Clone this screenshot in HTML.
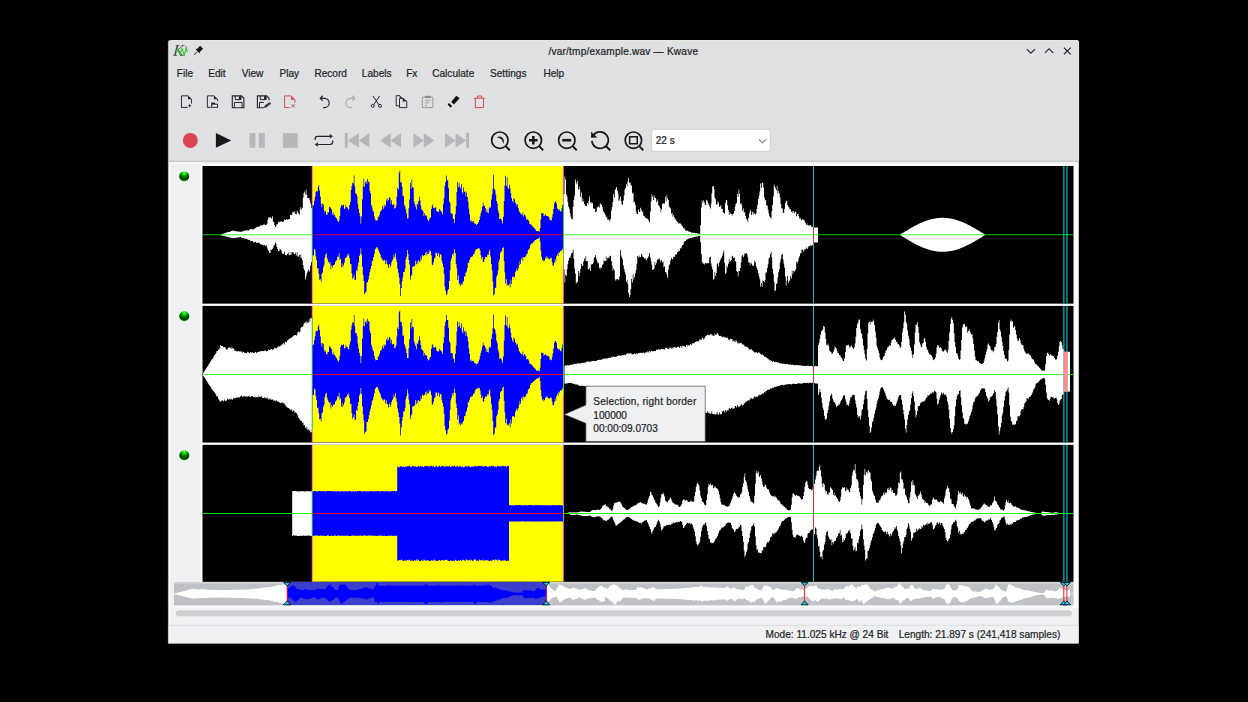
<!DOCTYPE html>
<html><head><meta charset="utf-8"><title>Kwave</title>
<style>html,body{margin:0;padding:0;background:#000;width:1248px;height:702px;overflow:hidden;font-family:"Liberation Sans",sans-serif}</style>
</head><body>
<svg width="1248" height="702" viewBox="0 0 1248 702" style="position:absolute;left:0;top:0">
<defs>
<radialGradient id="ledg" cx="0.5" cy="0.16" r="0.86"><stop offset="0" stop-color="#6aff6a"/><stop offset="0.22" stop-color="#08d808"/><stop offset="0.5" stop-color="#006c00"/><stop offset="0.78" stop-color="#003e00"/><stop offset="0.9" stop-color="#009a00"/><stop offset="1" stop-color="#34f034"/></radialGradient>
<path id="p1" d="M203 234.8V234.8H203.8V234.8H204.5V234.8H205.2V234.8H206V234.8H206.8V234.8H207.5V234.8H208.2V234.8H209V234.8H209.8V234.8H210.5V234.8H211.2V234.8H212V234.8H212.8V234.8H213.5V234.8H214.2V234.8H215V234.8H215.8V234.8H216.5V234.8H217.2V234.8H218V234.8H218.8V234.8H219.5V234.8H220.2V234.4H221V234.2H221.8V233.9H222.5V233.7H223.2V233.6H224V233.3H224.8V233H225.5V232.7H226.2V232.6H227V232.3H227.8V232.1H228.5V231.8H229.2V232H230V231.7H230.8V231.1H231.5V231.1H232.2V230.6H233V230.8H233.8V230.8H234.5V231.2H235.2V231H236V231.2H236.8V231.5H237.5V231.3H238.2V231.8H239V231.4H239.8V231.9H240.5V231.7H241.2V231.5H242V231.5H242.8V231.2H243.5V230.9H244.2V230.5H245V230.4H245.8V230.7H246.5V230.3H247.2V230.3H248V230.5H248.8V229.9H249.5V229.2H250.2V229.1H251V229.3H251.8V228.7H252.5V229.5H253.2V229.2H254V228.8H254.8V227.9H255.5V228.3H256.2V226.9H257V226.8H257.8V226.8H258.5V227H259.2V226.3H260V225.5H260.8V225.5H261.5V225.2H262.2V224.9H263V224.4H263.8V224.6H264.5V224.4H265.2V225H266V224.8H266.8V223.7H267.5V219.8H268.2V217.5H269V217.8H269.8V216.9H270.5V217.7H271.2V218.7H272V216.3H272.8V221.4H273.5V221.9H274.2V224.9H275V227.1H275.8V226.1H276.5V224.1H277.2V224.2H278V222H278.8V221.5H279.5V222.6H280.2V221.2H281V221.5H281.8V221.8H282.5V222H283.2V221.6H284V219.5H284.8V220.1H285.5V220H286.2V218.9H287V219.8H287.8V219.2H288.5V219.3H289.2V219.1H290V215.1H290.8V214.4H291.5V215.3H292.2V212.3H293V211.7H293.8V213H294.5V211.2H295.2V213.9H296V214.3H296.8V210.6H297.5V212.2H298.2V213.6H299V214.6H299.8V209.2H300.5V207H301.2V209.4H302V208.1H302.8V197.8H303.5V193.3H304.2V191.4H305V194.3H305.8V189.5H306.5V195H307.2V198H308V197.9H308.8V198H309.5V200.2H310.2V203.6H311V208H311.8V204.9H312.5V205.6H313.2V204.9H314V200.7H314.8V196.7H315.5V192H316.2V191.1H317V191.4H317.8V187.1H318.5V185H319.2V190.4H320V196.6H320.8V203.7H321.5V207.2H322.2V203.4H323V204.4H323.8V210.2H324.5V212.4H325.2V211.1H326V214.4H326.8V215H327.5V212.1H328.2V212.4H329V206.7H329.8V207.2H330.5V208.6H331.2V209.4H332V214.6H332.8V212H333.5V215.6H334.2V214.8H335V216.7H335.8V218.1H336.5V218.7H337.2V220.8H338V222.1H338.8V220.4H339.5V216.1H340.2V207.5H341V205.1H341.8V205.6H342.5V205.6H343.2V204.6H344V209H344.8V208.3H345.5V205.1H346.2V207.1H347V207.5H347.8V209.4H348.5V209.6H349.2V205H350V202H350.8V190.1H351.5V185.9H352.2V182.7H353V183.4H353.8V175.4H354.5V186.6H355.2V193.5H356V193.7H356.8V196.1H357.5V203.8H358.2V208.8H359V213.1H359.8V216.2H360.5V223.7H361.2V216.6H362V199.2H362.8V186.3H363.5V178.6H364.2V186.7H365V182.5H365.8V181.1H366.5V184.1H367.2V179.1H368V181.4H368.8V182.3H369.5V190.9H370.2V193.3H371V205.1H371.8V207.6H372.5V210.5H373.2V211.8H374V216.4H374.8V219.3H375.5V220.8H376.2V220.4H377V220.3H377.8V216.5H378.5V217.3H379.2V214.5H380V211.5H380.8V210.7H381.5V209.6H382.2V206.1H383V208.7H383.8V204.5H384.5V206.9H385.2V205.4H386V199.4H386.8V201.5H387.5V197.9H388.2V200.3H389V197.2H389.8V198.3H390.5V204H391.2V200.3H392V204.9H392.8V204.4H393.5V204.1H394.2V208.6H395V208H395.8V205.6H396.5V196.8H397.2V188H398V189.5H398.8V172.7H399.5V170.6H400.2V182.2H401V182.3H401.8V186.8H402.5V196.5H403.2V195.7H404V204.7H404.8V206.8H405.5V209.5H406.2V213.4H407V218.5H407.8V218.3H408.5V208.3H409.2V199.6H410V182.8H410.8V188.8H411.5V179.5H412.2V187.2H413V187.7H413.8V201.6H414.5V204H415.2V206.4H416V209.6H416.8V203.7H417.5V204.5H418.2V201H419V196.7H419.8V200.6H420.5V205.4H421.2V209.5H422V210.3H422.8V211.3H423.5V216.1H424.2V213.3H425V215.6H425.8V215.3H426.5V216.5H427.2V219.4H428V221H428.8V220.1H429.5V218H430.2V217.5H431V209.1H431.8V205.9H432.5V204.3H433.2V208H434V208.2H434.8V207.6H435.5V207.2H436.2V210.9H437V211.6H437.8V212.1H438.5V211.5H439.2V209.1H440V210.3H440.8V211.6H441.5V212.2H442.2V214.5H443V203.7H443.8V197.7H444.5V186.1H445.2V182.1H446V175.5H446.8V180.5H447.5V180.3H448.2V188.2H449V201.6H449.8V203.3H450.5V213.3H451.2V213.3H452V214H452.8V218.8H453.5V218.8H454.2V223.1H455V214.1H455.8V206H456.5V191.9H457.2V182H458V187.2H458.8V182.7H459.5V186.5H460.2V188.6H461V183.9H461.8V192H462.5V194H463.2V187.6H464V191.9H464.8V191.1H465.5V196.4H466.2V192.6H467V196.8H467.8V201.6H468.5V208.8H469.2V214.2H470V221.2H470.8V219.8H471.5V222H472.2V221.4H473V221.1H473.8V223H474.5V223.7H475.2V223.8H476V225H476.8V223.7H477.5V224.1H478.2V222H479V219.9H479.8V216.4H480.5V213.2H481.2V210.7H482V206.8H482.8V202.8H483.5V205.7H484.2V205.9H485V208H485.8V212.2H486.5V209.3H487.2V212.5H488V213H488.8V208.5H489.5V206.6H490.2V207.8H491V199.4H491.8V194.6H492.5V188.7H493.2V174.8H494V188.9H494.8V190.4H495.5V194.5H496.2V201.1H497V203.6H497.8V210.2H498.5V212.9H499.2V219.1H500V218.6H500.8V219H501.5V220.8H502.2V223.4H503V216.8H503.8V201H504.5V185.5H505.2V175.8H506V186H506.8V177.3H507.5V187.6H508.2V188.9H509V184.8H509.8V188.5H510.5V193.2H511.2V198H512V201H512.8V202.7H513.5V198H514.2V199.2H515V202.4H515.8V204.1H516.5V206H517.2V204.2H518V208.2H518.8V211.3H519.5V212.3H520.2V213.6H521V214.2H521.8V215.2H522.5V211.9H523.2V216.5H524V214.3H524.8V215.4H525.5V216.7H526.2V219.7H527V219.3H527.8V219.7H528.5V221H529.2V223.8H530V224.6H530.8V224.3H531.5V225.5H532.2V226.5H533V227.1H533.8V228.3H534.5V228.6H535.2V229.7H536V230.9H536.8V231.2H537.5V230.9H538.2V231.2H539V231.6H539.8V228.2H540.5V219.3H541.2V212.9H542V213.4H542.8V213.1H543.5V216.2H544.2V215.4H545V214.3H545.8V215.9H546.5V215.7H547.2V216.3H548V216.4H548.8V217.4H549.5V220.2H550.2V219.8H551V220.6H551.8V217.5H552.5V214.1H553.2V209H554V203.2H554.8V201.4H555.5V201.5H556.2V203.6H557V208.6H557.8V209.2H558.5V210.7H559.2V209.4H560V211.2H560.8V211.8H561.5V208.3H562.2V204.8H563V204.2H563.8V194.2H564.5V176.4H565.2V179.5H566V194.3H566.8V196.4H567.5V201.9H568.2V206.7H569V208.8H569.8V213.2H570.5V216.8H571.2V218.8H572V219.2H572.8V206.7H573.5V199.9H574.2V195.4H575V179.6H575.8V182.7H576.5V184.3H577.2V181.1H578V189.6H578.8V186.2H579.5V189.2H580.2V196.7H581V192.5H581.8V201.6H582.5V198.2H583.2V201.4H584V203.9H584.8V205.7H585.5V205.8H586.2V206.3H587V202.9H587.8V204.4H588.5V200.9H589.2V196.4H590V202.2H590.8V203.6H591.5V202H592.2V203.3H593V208.2H593.8V209.1H594.5V208.4H595.2V212.3H596V211.4H596.8V207.4H597.5V206.9H598.2V206.3H599V207.5H599.8V203H600.5V204.6H601.2V204.8H602V207.2H602.8V210.8H603.5V211.9H604.2V213.5H605V215.1H605.8V217.5H606.5V216.4H607.2V219.4H608V219.4H608.8V219.9H609.5V221.5H610.2V219.1H611V210.6H611.8V207H612.5V201.9H613.2V193.9H614V197.4H614.8V190.1H615.5V188.8H616.2V186.9H617V190.6H617.8V193.8H618.5V201.1H619.2V199.2H620V196.5H620.8V201.1H621.5V204.1H622.2V205H623V200.5H623.8V195.2H624.5V189.4H625.2V188.1H626V183.9H626.8V186.6H627.5V181.4H628.2V178H629V183H629.8V182.3H630.5V184.8H631.2V185.7H632V193.5H632.8V192.4H633.5V202.5H634.2V201.7H635V204.7H635.8V211.6H636.5V213.7H637.2V213.9H638V209.5H638.8V212H639.5V211.8H640.2V207.8H641V209.8H641.8V211.9H642.5V211.5H643.2V215.7H644V215.9H644.8V217.9H645.5V217.3H646.2V218.8H647V218.4H647.8V219.2H648.5V221H649.2V222.4H650V211.4H650.8V201.6H651.5V194.2H652.2V196.5H653V199.9H653.8V195.5H654.5V197.4H655.2V197.9H656V202.3H656.8V199.3H657.5V201H658.2V205.2H659V206.3H659.8V208H660.5V212.2H661.2V209.2H662V203.7H662.8V203.5H663.5V203.2H664.2V203.6H665V196.7H665.8V201.2H666.5V195.2H667.2V198.6H668V199.9H668.8V206.6H669.5V207.4H670.2V208.6H671V213.4H671.8V212.9H672.5V216.8H673.2V215.1H674V217.2H674.8V219.6H675.5V218.8H676.2V220.9H677V221.8H677.8V222.6H678.5V223.8H679.2V223.2H680V223.5H680.8V224.4H681.5V225.6H682.2V226.2H683V228H683.8V228.2H684.5V229.2H685.2V230.5H686V230.7H686.8V230.5H687.5V230.9H688.2V231.6H689V231.7H689.8V231.8H690.5V232.2H691.2V232.7H692V232.4H692.8V232.9H693.5V232.8H694.2V232.8H695V233.2H695.8V233H696.5V233.2H697.2V233.4H698V233.4H698.8V233.7H699.5V233.8H700.2V224.9H701V207.5H701.8V200.5H702.5V203.1H703.2V200.6H704V202.6H704.8V204.7H705.5V205.1H706.2V199.8H707V200.8H707.8V203.1H708.5V204.7H709.2V206.6H710V208.4H710.8V203.8H711.5V193.4H712.2V186.6H713V186.1H713.8V189.2H714.5V197.6H715.2V199.3H716V204.6H716.8V204.6H717.5V201.5H718.2V202.5H719V207H719.8V206.4H720.5V205H721.2V208.8H722V208.7H722.8V212.2H723.5V213.1H724.2V213.8H725V203.3H725.8V200.2H726.5V199.9H727.2V205.5H728V209.9H728.8V215H729.5V212H730.2V213.8H731V213.9H731.8V215.8H732.5V214H733.2V213.5H734V210.9H734.8V206.4H735.5V203.9H736.2V202.8H737V194.1H737.8V197H738.5V189.8H739.2V193.8H740V204.1H740.8V202.9H741.5V205.4H742.2V211.1H743V208.6H743.8V212.7H744.5V211.8H745.2V215.8H746V218.8H746.8V219.9H747.5V221.7H748.2V217.9H749V213.6H749.8V209.6H750.5V211.1H751.2V215H752V211.7H752.8V214.5H753.5V212.3H754.2V213.8H755V214.5H755.8V213.4H756.5V209.1H757.2V204.8H758V199.1H758.8V195.3H759.5V191.6H760.2V183.6H761V187.8H761.8V182.4H762.5V183.1H763.2V187.6H764V197.6H764.8V200.5H765.5V199.9H766.2V205.4H767V205.7H767.8V209.7H768.5V213.3H769.2V216.4H770V217.5H770.8V218.5H771.5V211.3H772.2V204.8H773V196.5H773.8V184.4H774.5V186.6H775.2V188.3H776V190.3H776.8V185.8H777.5V193.4H778.2V190.9H779V193.6H779.8V197.4H780.5V203.9H781.2V208.2H782V208.5H782.8V213H783.5V212.7H784.2V208.8H785V203.1H785.8V200.9H786.5V201H787.2V204.9H788V206.6H788.8V207.7H789.5V209.7H790.2V208.9H791V211.9H791.8V210.7H792.5V213.2H793.2V211.1H794V213.2H794.8V211.6H795.5V212H796.2V216.3H797V214.1H797.8V213.9H798.5V216.3H799.2V218.4H800V218.2H800.8V219.8H801.5V220.2H802.2V219.1H803V219.5H803.8V220.1H804.5V221.4H805.2V223.2H806V224.9H806.8V223.4H807.5V225.3H808.2V225.5H809V225.6H809.8V225H810.5V225.3H811.2V226.8H812V226.9H812.8V226.8H813.5V227.4H814.2V227.4H815V227.4H815.8V227.4H816.5V227.4H817.2V227.4H818V234.8H818.8V234.8H819.5V234.8H820.2V234.8H821V234.8H821.8V234.8H822.5V234.8H823.2V234.8H824V234.8H824.8V234.8H825.5V234.8H826.2V234.8H827V234.8H827.8V234.8H828.5V234.8H829.2V234.8H830V234.8H830.8V234.8H831.5V234.8H832.2V234.8H833V234.8H833.8V234.8H834.5V234.8H835.2V234.8H836V234.8H836.8V234.8H837.5V234.8H838.2V234.8H839V234.8H839.8V234.8H840.5V234.8H841.2V234.8H842V234.8H842.8V234.8H843.5V234.8H844.2V234.8H845V234.8H845.8V234.8H846.5V234.8H847.2V234.8H848V234.8H848.8V234.8H849.5V234.8H850.2V234.8H851V234.8H851.8V234.8H852.5V234.8H853.2V234.8H854V234.8H854.8V234.8H855.5V234.8H856.2V234.8H857V234.8H857.8V234.8H858.5V234.8H859.2V234.8H860V234.8H860.8V234.8H861.5V234.8H862.2V234.8H863V234.8H863.8V234.8H864.5V234.8H865.2V234.8H866V234.8H866.8V234.8H867.5V234.8H868.2V234.8H869V234.8H869.8V234.8H870.5V234.8H871.2V234.8H872V234.8H872.8V234.8H873.5V234.8H874.2V234.8H875V234.8H875.8V234.8H876.5V234.8H877.2V234.8H878V234.8H878.8V234.8H879.5V234.8H880.2V234.8H881V234.8H881.8V234.8H882.5V234.8H883.2V234.8H884V234.8H884.8V234.8H885.5V234.8H886.2V234.8H887V234.8H887.8V234.8H888.5V234.8H889.2V234.8H890V234.8H890.8V234.8H891.5V234.8H892.2V234.8H893V234.8H893.8V234.8H894.5V234.8H895.2V234.8H896V234.8H896.8V234.8H897.5V234.8H898.2V234.8H899V234.8H899.8V234.6H900.5V234.1H901.2V233.6H902V233.2H902.8V232.7H903.5V232.3H904.2V231.8H905V231.3H905.8V230.9H906.5V230.4H907.2V230H908V229.5H908.8V229.1H909.5V228.6H910.2V228.2H911V227.8H911.8V227.4H912.5V226.9H913.2V226.5H914V226.1H914.8V225.7H915.5V225.3H916.2V224.9H917V224.6H917.8V224.2H918.5V223.8H919.2V223.5H920V223.1H920.8V222.8H921.5V222.5H922.2V222.2H923V221.8H923.8V221.6H924.5V221.3H925.2V221H926V220.7H926.8V220.5H927.5V220.2H928.2V220H929V219.8H929.8V219.5H930.5V219.3H931.2V219.2H932V219H932.8V218.8H933.5V218.7H934.2V218.5H935V218.4H935.8V218.3H936.5V218.2H937.2V218.1H938V218H938.8V217.9H939.5V217.9H940.2V217.8H941V217.8H941.8V217.8H942.5V217.8H943.2V217.8H944V217.8H944.8V217.9H945.5V217.9H946.2V218H947V218.1H947.8V218.2H948.5V218.3H949.2V218.4H950V218.5H950.8V218.6H951.5V218.8H952.2V218.9H953V219.1H953.8V219.3H954.5V219.5H955.2V219.7H956V219.9H956.8V220.2H957.5V220.4H958.2V220.7H959V220.9H959.8V221.2H960.5V221.5H961.2V221.8H962V222.1H962.8V222.4H963.5V222.7H964.2V223.1H965V223.4H965.8V223.8H966.5V224.1H967.2V224.5H968V224.9H968.8V225.3H969.5V225.6H970.2V226H971V226.4H971.8V226.9H972.5V227.3H973.2V227.7H974V228.1H974.8V228.6H975.5V229H976.2V229.4H977V229.9H977.8V230.3H978.5V230.8H979.2V231.2H980V231.7H980.8V232.2H981.5V232.6H982.2V233.1H983V233.6H983.8V234H984.5V234.5H985.2V234.8H986V234.8H986.8V234.8H987.5V234.8H988.2V234.8H989V234.8H989.8V234.8H990.5V234.8H991.2V234.8H992V234.8H992.8V234.8H993.5V234.8H994.2V234.8H995V234.8H995.8V234.8H996.5V234.8H997.2V234.8H998V234.8H998.8V234.8H999.5V234.8H1000.2V234.8H1001V234.8H1001.8V234.8H1002.5V234.8H1003.2V234.8H1004V234.8H1004.8V234.8H1005.5V234.8H1006.2V234.8H1007V234.8H1007.8V234.8H1008.5V234.8H1009.2V234.8H1010V234.8H1010.8V234.8H1011.5V234.8H1012.2V234.8H1013V234.8H1013.8V234.8H1014.5V234.8H1015.2V234.8H1016V234.8H1016.8V234.8H1017.5V234.8H1018.2V234.8H1019V234.8H1019.8V234.8H1020.5V234.8H1021.2V234.8H1022V234.8H1022.8V234.8H1023.5V234.8H1024.2V234.8H1025V234.8H1025.8V234.8H1026.5V234.8H1027.2V234.8H1028V234.8H1028.8V234.8H1029.5V234.8H1030.2V234.8H1031V234.8H1031.8V234.8H1032.5V234.8H1033.2V234.8H1034V234.8H1034.8V234.8H1035.5V234.8H1036.2V234.8H1037V234.8H1037.8V234.8H1038.5V234.8H1039.2V234.8H1040V234.8H1040.8V234.8H1041.5V234.8H1042.2V234.8H1043V234.8H1043.8V234.8H1044.5V234.8H1045.2V234.8H1046V234.8H1046.8V234.8H1047.5V234.8H1048.2V234.8H1049V234.8H1049.8V234.8H1050.5V234.8H1051.2V234.8H1052V234.8H1052.8V234.8H1053.5V234.8H1054.2V234.8H1055V234.8H1055.8V234.8H1056.5V234.8H1057.2V234.8H1058V234.8H1058.8V234.8H1059.5V234.8H1060.2V234.8H1061V234.8H1061.8V234.8H1062.5V234.8H1063.2V234.8H1064V234.8H1064.8V234.8H1065.5V234.8H1066.2V234.8H1067V234.8H1067.8V234.8H1068.5V234.8H1069.2V234.8H1070V234.8H1070.8V234.8H1071.5V234.8H1072.2V234.8H1073V234.8H1073.8V234.8H1073V234.8H1072.2V234.8H1071.5V234.8H1070.8V234.8H1070V234.8H1069.2V234.8H1068.5V234.8H1067.8V234.8H1067V234.8H1066.2V234.8H1065.5V234.8H1064.8V234.8H1064V234.8H1063.2V234.8H1062.5V234.8H1061.8V234.8H1061V234.8H1060.2V234.8H1059.5V234.8H1058.8V234.8H1058V234.8H1057.2V234.8H1056.5V234.8H1055.8V234.8H1055V234.8H1054.2V234.8H1053.5V234.8H1052.8V234.8H1052V234.8H1051.2V234.8H1050.5V234.8H1049.8V234.8H1049V234.8H1048.2V234.8H1047.5V234.8H1046.8V234.8H1046V234.8H1045.2V234.8H1044.5V234.8H1043.8V234.8H1043V234.8H1042.2V234.8H1041.5V234.8H1040.8V234.8H1040V234.8H1039.2V234.8H1038.5V234.8H1037.8V234.8H1037V234.8H1036.2V234.8H1035.5V234.8H1034.8V234.8H1034V234.8H1033.2V234.8H1032.5V234.8H1031.8V234.8H1031V234.8H1030.2V234.8H1029.5V234.8H1028.8V234.8H1028V234.8H1027.2V234.8H1026.5V234.8H1025.8V234.8H1025V234.8H1024.2V234.8H1023.5V234.8H1022.8V234.8H1022V234.8H1021.2V234.8H1020.5V234.8H1019.8V234.8H1019V234.8H1018.2V234.8H1017.5V234.8H1016.8V234.8H1016V234.8H1015.2V234.8H1014.5V234.8H1013.8V234.8H1013V234.8H1012.2V234.8H1011.5V234.8H1010.8V234.8H1010V234.8H1009.2V234.8H1008.5V234.8H1007.8V234.8H1007V234.8H1006.2V234.8H1005.5V234.8H1004.8V234.8H1004V234.8H1003.2V234.8H1002.5V234.8H1001.8V234.8H1001V234.8H1000.2V234.8H999.5V234.8H998.8V234.8H998V234.8H997.2V234.8H996.5V234.8H995.8V234.8H995V234.8H994.2V234.8H993.5V234.8H992.8V234.8H992V234.8H991.2V234.8H990.5V234.8H989.8V234.8H989V234.8H988.2V234.8H987.5V234.8H986.8V234.8H986V234.8H985.2V235.1H984.5V235.6H983.8V236H983V236.5H982.2V237H981.5V237.4H980.8V237.9H980V238.4H979.2V238.8H978.5V239.3H977.8V239.7H977V240.2H976.2V240.6H975.5V241H974.8V241.5H974V241.9H973.2V242.3H972.5V242.7H971.8V243.2H971V243.6H970.2V244H969.5V244.3H968.8V244.7H968V245.1H967.2V245.5H966.5V245.8H965.8V246.2H965V246.5H964.2V246.9H963.5V247.2H962.8V247.5H962V247.8H961.2V248.1H960.5V248.4H959.8V248.7H959V248.9H958.2V249.2H957.5V249.4H956.8V249.7H956V249.9H955.2V250.1H954.5V250.3H953.8V250.5H953V250.7H952.2V250.8H951.5V251H950.8V251.1H950V251.2H949.2V251.3H948.5V251.4H947.8V251.5H947V251.6H946.2V251.7H945.5V251.7H944.8V251.8H944V251.8H943.2V251.8H942.5V251.8H941.8V251.8H941V251.8H940.2V251.7H939.5V251.7H938.8V251.6H938V251.5H937.2V251.4H936.5V251.3H935.8V251.2H935V251.1H934.2V250.9H933.5V250.8H932.8V250.6H932V250.4H931.2V250.3H930.5V250.1H929.8V249.8H929V249.6H928.2V249.4H927.5V249.1H926.8V248.9H926V248.6H925.2V248.3H924.5V248H923.8V247.8H923V247.4H922.2V247.1H921.5V246.8H920.8V246.5H920V246.1H919.2V245.8H918.5V245.4H917.8V245H917V244.7H916.2V244.3H915.5V243.9H914.8V243.5H914V243.1H913.2V242.7H912.5V242.2H911.8V241.8H911V241.4H910.2V241H909.5V240.5H908.8V240.1H908V239.6H907.2V239.2H906.5V238.7H905.8V238.3H905V237.8H904.2V237.3H903.5V236.9H902.8V236.4H902V236H901.2V235.5H900.5V235H899.8V234.8H899V234.8H898.2V234.8H897.5V234.8H896.8V234.8H896V234.8H895.2V234.8H894.5V234.8H893.8V234.8H893V234.8H892.2V234.8H891.5V234.8H890.8V234.8H890V234.8H889.2V234.8H888.5V234.8H887.8V234.8H887V234.8H886.2V234.8H885.5V234.8H884.8V234.8H884V234.8H883.2V234.8H882.5V234.8H881.8V234.8H881V234.8H880.2V234.8H879.5V234.8H878.8V234.8H878V234.8H877.2V234.8H876.5V234.8H875.8V234.8H875V234.8H874.2V234.8H873.5V234.8H872.8V234.8H872V234.8H871.2V234.8H870.5V234.8H869.8V234.8H869V234.8H868.2V234.8H867.5V234.8H866.8V234.8H866V234.8H865.2V234.8H864.5V234.8H863.8V234.8H863V234.8H862.2V234.8H861.5V234.8H860.8V234.8H860V234.8H859.2V234.8H858.5V234.8H857.8V234.8H857V234.8H856.2V234.8H855.5V234.8H854.8V234.8H854V234.8H853.2V234.8H852.5V234.8H851.8V234.8H851V234.8H850.2V234.8H849.5V234.8H848.8V234.8H848V234.8H847.2V234.8H846.5V234.8H845.8V234.8H845V234.8H844.2V234.8H843.5V234.8H842.8V234.8H842V234.8H841.2V234.8H840.5V234.8H839.8V234.8H839V234.8H838.2V234.8H837.5V234.8H836.8V234.8H836V234.8H835.2V234.8H834.5V234.8H833.8V234.8H833V234.8H832.2V234.8H831.5V234.8H830.8V234.8H830V234.8H829.2V234.8H828.5V234.8H827.8V234.8H827V234.8H826.2V234.8H825.5V234.8H824.8V234.8H824V234.8H823.2V234.8H822.5V234.8H821.8V234.8H821V234.8H820.2V234.8H819.5V234.8H818.8V234.8H818V242.6H817.2V242.6H816.5V242.6H815.8V242.6H815V242.6H814.2V242.6H813.5V244.3H812.8V245.2H812V245.7H811.2V246.3H810.5V244.8H809.8V246.3H809V246.3H808.2V248.5H807.5V249H806.8V247.5H806V249.1H805.2V250.8H804.5V249H803.8V251.4H803V249.7H802.2V249.7H801.5V253H800.8V253.4H800V256.2H799.2V258H798.5V260.9H797.8V263.3H797V261.8H796.2V269.2H795.5V270.2H794.8V271.8H794V271H793.2V274.3H792.5V270.4H791.8V278.6H791V276.2H790.2V281H789.5V280.2H788.8V283H788V276.1H787.2V280.7H786.5V285.6H785.8V276.5H785V267.8H784.2V263.4H783.5V259.4H782.8V253.7H782V255.1H781.2V259.1H780.5V262.6H779.8V269.2H779V272.3H778.2V277.4H777.5V283.3H776.8V284H776V290.3H775.2V291.2H774.5V282H773.8V273.8H773V268.7H772.2V257.5H771.5V251.8H770.8V254.1H770V257.6H769.2V258.4H768.5V264.3H767.8V268.2H767V272.6H766.2V272.4H765.5V279.9H764.8V282.1H764V280.9H763.2V280.6H762.5V286.9H761.8V283H761V286.4H760.2V279.3H759.5V276.6H758.8V273.3H758V269.9H757.2V268.3H756.5V266.1H755.8V262.2H755V260.8H754.2V265.5H753.5V266.2H752.8V265.4H752V263.8H751.2V262.6H750.5V265.3H749.8V262.8H749V262.3H748.2V257.4H747.5V254.4H746.8V253.1H746V253.7H745.2V253H744.5V255.5H743.8V256.9H743V254.9H742.2V256.2H741.5V262.2H740.8V268.1H740V271H739.2V270.9H738.5V276.5H737.8V272H737V270.9H736.2V261.7H735.5V260.9H734.8V257.5H734V258.1H733.2V256.3H732.5V255.7H731.8V260H731V261.1H730.2V262.1H729.5V258.9H728.8V263.8H728V267.2H727.2V265.6H726.5V273.3H725.8V273.8H725V262.7H724.2V250.4H723.5V252.9H722.8V255.5H722V257.7H721.2V258.7H720.5V260.6H719.8V262.4H719V266.5H718.2V263H717.5V264.1H716.8V273H716V275.7H715.2V271.7H714.5V278.8H713.8V279.7H713V269.4H712.2V266.4H711.5V263.5H710.8V256.8H710V257.4H709.2V263.2H708.5V263H707.8V263.3H707V263.4H706.2V263.1H705.5V262.8H704.8V264.5H704V263.4H703.2V263.5H702.5V262.1H701.8V254H701V242.3H700.2V235.9H699.5V236H698.8V236H698V236.4H697.2V236.6H696.5V236.7H695.8V236.8H695V237H694.2V236.9H693.5V237.4H692.8V237.6H692V237.7H691.2V238H690.5V238H689.8V238.6H689V238.8H688.2V238.9H687.5V239.5H686.8V239.7H686V240.9H685.2V241.1H684.5V241.9H683.8V244.5H683V245.1H682.2V246.5H681.5V248.6H680.8V248.3H680V250.9H679.2V250.8H678.5V252H677.8V252.2H677V254.6H676.2V254H675.5V255.3H674.8V257.1H674V256.7H673.2V259.3H672.5V259.3H671.8V258.1H671V260.4H670.2V264.3H669.5V265.2H668.8V269.7H668V277.8H667.2V274.4H666.5V272.3H665.8V272H665V266.3H664.2V267.3H663.5V261.6H662.8V262.4H662V260.1H661.2V262.3H660.5V260.6H659.8V258.2H659V259.6H658.2V259H657.5V260.2H656.8V263.3H656V265.1H655.2V261.9H654.5V268.5H653.8V269.8H653V270H652.2V264.7H651.5V261.2H650.8V257.6H650V253.1H649.2V255.7H648.5V257.3H647.8V258.5H647V260.3H646.2V257.9H645.5V259.2H644.8V258.5H644V256.9H643.2V257.3H642.5V255.5H641.8V253.9H641V257H640.2V257.4H639.5V255.5H638.8V257.3H638V255.9H637.2V264H636.5V270.1H635.8V273.2H635V277.1H634.2V279.5H633.5V274.3H632.8V282.4H632V278.9H631.2V289.3H630.5V295H629.8V297H629V293.2H628.2V284H627.5V279.8H626.8V282H626V274.6H625.2V271.8H624.5V269H623.8V265.2H623V259.5H622.2V257.5H621.5V255.5H620.8V250.3H620V276.6H619.2V280.2H618.5V279.6H617.8V279.1H617V279.2H616.2V280.8H615.5V279.6H614.8V270.5H614V268.5H613.2V270.4H612.5V265.5H611.8V260.9H611V255.7H610.2V255.9H609.5V258.4H608.8V257.6H608V257.9H607.2V260.6H606.5V256.6H605.8V261.2H605V261.2H604.2V260.2H603.5V264H602.8V265.1H602V267.8H601.2V267.3H600.5V269.2H599.8V267.7H599V262.8H598.2V263.4H597.5V261.3H596.8V258.7H596V255.2H595.2V256.9H594.5V257.7H593.8V262.6H593V264H592.2V264.5H591.5V264.6H590.8V271.1H590V268.3H589.2V269.2H588.5V269.5H587.8V261H587V261.2H586.2V256.2H585.5V260.8H584.8V258.5H584V261.4H583.2V265.7H582.5V266.3H581.8V263.8H581V268.9H580.2V272.7H579.5V276.3H578.8V271H578V281.7H577.2V282.5H576.5V283.5H575.8V273.5H575V268.4H574.2V258.8H573.5V249.8H572.8V252.7H572V253.3H571.2V255.6H570.5V258H569.8V257.8H569V260.5H568.2V264.2H567.5V269.3H566.8V276.1H566V274.8H565.2V282.6H564.5V269.2H563.8V254.3H563V248.7H562.2V250.3H561.5V251H560.8V250.9H560V252.8H559.2V251.9H558.5V255.9H557.8V254.2H557V256.3H556.2V261.5H555.5V258.9H554.8V262.7H554V265.6H553.2V265.4H552.5V262H551.8V258.1H551V257.7H550.2V259H549.5V259.4H548.8V258.4H548V257.2H547.2V258.5H546.5V256.3H545.8V258.2H545V260.4H544.2V261.6H543.5V259.4H542.8V260.6H542V256.8H541.2V250.4H540.5V241.5H539.8V237.6H539V238.4H538.2V238.6H537.5V238.9H536.8V239.4H536V240.1H535.2V240.1H534.5V241.5H533.8V241.9H533V243.2H532.2V243.7H531.5V243.7H530.8V245.3H530V248.3H529.2V249.5H528.5V250.1H527.8V253.6H527V254.3H526.2V255.9H525.5V257.3H524.8V257.6H524V257H523.2V261H522.5V257.3H521.8V258.9H521V264.1H520.2V261.6H519.5V265.2H518.8V268.6H518V270.9H517.2V268.6H516.5V270.5H515.8V272.3H515V277.3H514.2V276.8H513.5V276.5H512.8V276.9H512V284H511.2V279.8H510.5V287.6H509.8V283.7H509V285.6H508.2V284.3H507.5V285.8H506.8V279.2H506V283.4H505.2V272.6H504.5V261.1H503.8V247.2H503V248H502.2V251.3H501.5V251.5H500.8V252.7H500V259.4H499.2V261.9H498.5V270.6H497.8V274.8H497V276.7H496.2V287.9H495.5V287.8H494.8V293.9H494V295.5H493.2V281.4H492.5V270.6H491.8V264.1H491V256.8H490.2V249.5H489.5V251.5H488.8V254.8H488V254.6H487.2V257H486.5V257H485.8V256.9H485V259H484.2V261.9H483.5V262H482.8V256.9H482V258.5H481.2V255.2H480.5V250.6H479.8V248.5H479V248.3H478.2V249.1H477.5V248.4H476.8V249.3H476V249.8H475.2V251.7H474.5V254.2H473.8V254.2H473V256.3H472.2V256.7H471.5V257.1H470.8V257.7H470V260.1H469.2V263.1H468.5V262.4H467.8V267.9H467V271.5H466.2V272.9H465.5V276.4H464.8V276.6H464V281.3H463.2V282.3H462.5V285H461.8V283.9H461V285.9H460.2V283.1H459.5V284.7H458.8V275.6H458V279.9H457.2V268.3H456.5V264H455.8V253.3H455V249H454.2V253H453.5V255.8H452.8V254H452V258.2H451.2V261H450.5V270.3H449.8V281H449V288.9H448.2V290.2H447.5V293.8H446.8V294.9H446V290.7H445.2V286.6H444.5V274.1H443.8V267H443V263.4H442.2V260.6H441.5V254.8H440.8V254.3H440V257.2H439.2V253.4H438.5V253H437.8V256.1H437V252.8H436.2V253H435.5V257.5H434.8V258.6H434V262.2H433.2V264.9H432.5V264.8H431.8V255.5H431V251.1H430.2V252.5H429.5V250.2H428.8V253.9H428V254H427.2V251.6H426.5V255.6H425.8V252.7H425V255.1H424.2V255.7H423.5V256.3H422.8V254.9H422V259.5H421.2V256.6H420.5V261.5H419.8V261.7H419V260.3H418.2V263.4H417.5V260.9H416.8V264.2H416V260.7H415.2V265.7H414.5V266.3H413.8V266.6H413V266.8H412.2V274.6H411.5V276H410.8V279.4H410V264.6H409.2V259.9H408.5V254.1H407.8V250H407V256.7H406.2V259.6H405.5V268.4H404.8V272H404V272H403.2V277.5H402.5V281.2H401.8V288H401V296H400.2V283.9H399.5V277.5H398.8V272.8H398V268.8H397.2V262.1H396.5V258.9H395.8V253.3H395V257.1H394.2V254.8H393.5V258.7H392.8V260.5H392V262.3H391.2V265.2H390.5V267.3H389.8V263.9H389V267.9H388.2V264.6H387.5V264.3H386.8V260.6H386V264H385.2V260.5H384.5V259.5H383.8V260.9H383V260H382.2V258.8H381.5V257.5H380.8V254.4H380V252.9H379.2V251H378.5V249.2H377.8V247.5H377V247.3H376.2V248.4H375.5V249.3H374.8V253.7H374V257.1H373.2V260.3H372.5V261.6H371.8V265.9H371V269.1H370.2V272H369.5V275.7H368.8V279.5H368V282.3H367.2V282.3H366.5V291.7H365.8V292.5H365V294.1H364.2V280.9H363.5V275H362.8V266.8H362V254.5H361.2V248.3H360.5V253.8H359.8V256H359V262.4H358.2V266.2H357.5V271.3H356.8V270.3H356V279.9H355.2V280.1H354.5V274.8H353.8V277.4H353V278.8H352.2V273.3H351.5V264.1H350.8V264.3H350V258.3H349.2V253.7H348.5V256H347.8V254.6H347V257H346.2V258.1H345.5V257.9H344.8V262.8H344V265.2H343.2V267.3H342.5V263.5H341.8V267.2H341V258.7H340.2V260.1H339.5V253.2H338.8V256.8H338V256.7H337.2V259.8H336.5V261H335.8V261.8H335V264.6H334.2V264.9H333.5V265.2H332.8V267.4H332V265.6H331.2V269H330.5V262.1H329.8V263.4H329V262.1H328.2V260.2H327.5V258.1H326.8V253.3H326V254.4H325.2V257.7H324.5V264.8H323.8V267.2H323V272.6H322.2V274H321.5V282H320.8V279.3H320V279.7H319.2V274H318.5V267.9H317.8V268.4H317V260.3H316.2V256.4H315.5V250.2H314.8V248.9H314V255.4H313.2V255.3H312.5V262.3H311.8V262.1H311V265.4H310.2V270.6H309.5V271.9H308.8V269.7H308V271.4H307.2V273.6H306.5V276.5H305.8V279.2H305V270.6H304.2V268.5H303.5V265H302.8V260.3H302V258.2H301.2V254.3H300.5V257.8H299.8V255.1H299V256.6H298.2V256.4H297.5V252.3H296.8V255.6H296V252.8H295.2V254.3H294.5V254.1H293.8V252.4H293V252.1H292.2V254.5H291.5V251.9H290.8V255.1H290V255.3H289.2V252.5H288.5V254.4H287.8V253.7H287V255.3H286.2V255H285.5V254.7H284.8V251.8H284V253.9H283.2V253.8H282.5V253.4H281.8V250.5H281V249.6H280.2V249H279.5V251.2H278.8V251H278V249.1H277.2V247H276.5V243.8H275.8V242.6H275V244.7H274.2V245.5H273.5V247.8H272.8V248.9H272V249.9H271.2V249.4H270.5V252.9H269.8V252.4H269V250.9H268.2V249.8H267.5V247.6H266.8V245.3H266V246.2H265.2V245.2H264.5V244.8H263.8V245.6H263V245.1H262.2V244.9H261.5V244.3H260.8V244.2H260V243.4H259.2V242.5H258.5V242.4H257.8V242.9H257V243.1H256.2V242H255.5V241.5H254.8V242.4H254V242.4H253.2V241.3H252.5V241H251.8V240.9H251V241.2H250.2V240.1H249.5V240.3H248.8V239.8H248V239.5H247.2V239H246.5V238.9H245.8V238.6H245V238.8H244.2V238.1H243.5V238H242.8V237.7H242V237.7H241.2V237.3H240.5V237.1H239.8V237.3H239V237.5H238.2V237.7H237.5V237.3H236.8V238H236V238H235.2V237.7H234.5V238.2H233.8V238.1H233V238.2H232.2V238H231.5V237.8H230.8V237.6H230V237.5H229.2V237.5H228.5V237.1H227.8V236.8H227V236.9H226.2V236.3H225.5V236.4H224.8V236H224V236.1H223.2V235.8H222.5V235.6H221.8V235.4H221V235.2H220.2V234.8H219.5V234.8H218.8V234.8H218V234.8H217.2V234.8H216.5V234.8H215.8V234.8H215V234.8H214.2V234.8H213.5V234.8H212.8V234.8H212V234.8H211.2V234.8H210.5V234.8H209.8V234.8H209V234.8H208.2V234.8H207.5V234.8H206.8V234.8H206V234.8H205.2V234.8H204.5V234.8H203.8V234.8H203Z"/><path id="p2" d="M203 372.8V372.8H203.8V371.8H204.5V370.5H205.2V369.2H206V368.3H206.8V367H207.5V365.9H208.2V364.4H209V363.4H209.8V362.2H210.5V360.9H211.2V359.6H212V359.3H212.8V358H213.5V356.5H214.2V354.9H215V354.3H215.8V352.8H216.5V351.1H217.2V350.9H218V349.8H218.8V349.5H219.5V348H220.2V345.2H221V345.9H221.8V345.9H222.5V346.2H223.2V347.2H224V347.1H224.8V347.2H225.5V348.6H226.2V349.7H227V349.3H227.8V347.7H228.5V347.8H229.2V347.4H230V347.8H230.8V349H231.5V347.2H232.2V348.2H233V348.4H233.8V349.3H234.5V351H235.2V350.7H236V351H236.8V351.9H237.5V350.9H238.2V351H239V351.5H239.8V351.5H240.5V351.5H241.2V351.5H242V352.8H242.8V351.9H243.5V351.8H244.2V352.8H245V353H245.8V352.7H246.5V353.4H247.2V351.8H248V352.3H248.8V353.1H249.5V353.6H250.2V352.1H251V353.1H251.8V352.1H252.5V352.5H253.2V353.1H254V353H254.8V351.8H255.5V351.9H256.2V353.2H257V352.2H257.8V352.1H258.5V351.5H259.2V351.7H260V351.3H260.8V351.1H261.5V351H262.2V351.3H263V351.1H263.8V350.9H264.5V350.4H265.2V350.4H266V351.2H266.8V351.1H267.5V350.9H268.2V349.3H269V349.9H269.8V350.1H270.5V348.9H271.2V349.1H272V349.9H272.8V349.3H273.5V349.2H274.2V347.8H275V347.7H275.8V348.7H276.5V348.2H277.2V347.1H278V346.5H278.8V346.2H279.5V346.5H280.2V345.4H281V345.6H281.8V344H282.5V344.6H283.2V342.9H284V344.4H284.8V342.1H285.5V341.2H286.2V342.5H287V340.6H287.8V340.2H288.5V339.1H289.2V338.6H290V338.5H290.8V337.6H291.5V337.7H292.2V336.5H293V336.3H293.8V334.8H294.5V335.3H295.2V335H296V335.7H296.8V334.3H297.5V331.7H298.2V331.7H299V332.6H299.8V331.4H300.5V328.1H301.2V327H302V327.1H302.8V325.8H303.5V323.7H304.2V322.9H305V322H305.8V323.5H306.5V320.7H307.2V322.8H308V322.5H308.8V319.3H309.5V321.7H310.2V317.9H311V318.5H311.8V317.3H312.5V345.2H313.2V344.5H314V340.3H314.8V336.3H315.5V331.6H316.2V330.7H317V331H317.8V326.7H318.5V324.6H319.2V330H320V336.2H320.8V343.3H321.5V346.8H322.2V343H323V344H323.8V349.8H324.5V352H325.2V350.7H326V354H326.8V354.6H327.5V351.7H328.2V352H329V346.3H329.8V346.8H330.5V348.2H331.2V349H332V354.2H332.8V351.6H333.5V355.2H334.2V354.4H335V356.3H335.8V357.7H336.5V358.3H337.2V360.4H338V361.7H338.8V360H339.5V355.7H340.2V347.1H341V344.7H341.8V345.2H342.5V345.2H343.2V344.2H344V348.6H344.8V347.9H345.5V344.7H346.2V346.7H347V347.1H347.8V349H348.5V349.2H349.2V344.6H350V341.6H350.8V329.7H351.5V325.5H352.2V322.3H353V323H353.8V315H354.5V326.2H355.2V333.1H356V333.3H356.8V335.7H357.5V343.4H358.2V348.4H359V352.7H359.8V355.8H360.5V363.3H361.2V356.2H362V338.8H362.8V325.9H363.5V318.2H364.2V326.3H365V322.1H365.8V320.7H366.5V323.7H367.2V318.7H368V321H368.8V321.9H369.5V330.5H370.2V332.9H371V344.7H371.8V347.2H372.5V350.1H373.2V351.4H374V356H374.8V358.9H375.5V360.4H376.2V360H377V359.9H377.8V356.1H378.5V356.9H379.2V354.1H380V351.1H380.8V350.3H381.5V349.2H382.2V345.7H383V348.3H383.8V344.1H384.5V346.5H385.2V345H386V339H386.8V341.1H387.5V337.5H388.2V339.9H389V336.8H389.8V337.9H390.5V343.6H391.2V339.9H392V344.5H392.8V344H393.5V343.7H394.2V348.2H395V347.6H395.8V345.2H396.5V336.4H397.2V327.6H398V329.1H398.8V312.3H399.5V310.2H400.2V321.8H401V321.9H401.8V326.4H402.5V336.1H403.2V335.3H404V344.3H404.8V346.4H405.5V349.1H406.2V353H407V358.1H407.8V357.9H408.5V347.9H409.2V339.2H410V322.4H410.8V328.4H411.5V319.1H412.2V326.8H413V327.3H413.8V341.2H414.5V343.6H415.2V346H416V349.2H416.8V343.3H417.5V344.1H418.2V340.6H419V336.3H419.8V340.2H420.5V345H421.2V349.1H422V349.9H422.8V350.9H423.5V355.7H424.2V352.9H425V355.2H425.8V354.9H426.5V356.1H427.2V359H428V360.6H428.8V359.7H429.5V357.6H430.2V357.1H431V348.7H431.8V345.5H432.5V343.9H433.2V347.6H434V347.8H434.8V347.2H435.5V346.8H436.2V350.5H437V351.2H437.8V351.7H438.5V351.1H439.2V348.7H440V349.9H440.8V351.2H441.5V351.8H442.2V354.1H443V343.3H443.8V337.3H444.5V325.7H445.2V321.7H446V315.1H446.8V320.1H447.5V319.9H448.2V327.8H449V341.2H449.8V342.9H450.5V352.9H451.2V352.9H452V353.6H452.8V358.4H453.5V358.4H454.2V362.7H455V353.7H455.8V345.6H456.5V331.5H457.2V321.6H458V326.8H458.8V322.3H459.5V326.1H460.2V328.2H461V323.5H461.8V331.6H462.5V333.6H463.2V327.2H464V331.5H464.8V330.7H465.5V336H466.2V332.2H467V336.4H467.8V341.2H468.5V348.4H469.2V353.8H470V360.8H470.8V359.4H471.5V361.6H472.2V361H473V360.7H473.8V362.6H474.5V363.3H475.2V363.4H476V364.6H476.8V363.3H477.5V363.7H478.2V361.6H479V359.5H479.8V356H480.5V352.8H481.2V350.3H482V346.4H482.8V342.4H483.5V345.3H484.2V345.5H485V347.6H485.8V351.8H486.5V348.9H487.2V352.1H488V352.6H488.8V348.1H489.5V346.2H490.2V347.4H491V339H491.8V334.2H492.5V328.3H493.2V314.4H494V328.5H494.8V330H495.5V334.1H496.2V340.7H497V343.2H497.8V349.8H498.5V352.5H499.2V358.7H500V358.2H500.8V358.6H501.5V360.4H502.2V363H503V356.4H503.8V340.6H504.5V325.1H505.2V315.4H506V325.6H506.8V316.9H507.5V327.2H508.2V328.5H509V324.4H509.8V328.1H510.5V332.8H511.2V337.6H512V340.6H512.8V342.3H513.5V337.6H514.2V338.8H515V342H515.8V343.7H516.5V345.6H517.2V343.8H518V347.8H518.8V350.9H519.5V351.9H520.2V353.2H521V353.8H521.8V354.8H522.5V351.5H523.2V356.1H524V353.9H524.8V355H525.5V356.3H526.2V359.3H527V358.9H527.8V359.3H528.5V360.6H529.2V363.4H530V364.2H530.8V363.9H531.5V365.1H532.2V366.1H533V366.7H533.8V367.9H534.5V368.2H535.2V369.3H536V370.5H536.8V370.8H537.5V370.5H538.2V370.8H539V371.2H539.8V367.8H540.5V358.9H541.2V352.5H542V353H542.8V352.7H543.5V355.8H544.2V355H545V353.9H545.8V355.5H546.5V355.3H547.2V355.9H548V356H548.8V357H549.5V359.8H550.2V359.4H551V360.2H551.8V357.1H552.5V353.7H553.2V348.6H554V342.8H554.8V341H555.5V341.1H556.2V343.2H557V348.2H557.8V348.8H558.5V350.3H559.2V349H560V350.8H560.8V351.4H561.5V347.9H562.2V344.4H563V343.8H563.8V374.4H564.5V365.8H565.2V365.3H566V365.7H566.8V365.1H567.5V365.6H568.2V365.5H569V365.2H569.8V364.7H570.5V364.8H571.2V365.1H572V364.6H572.8V364.5H573.5V363.9H574.2V363.8H575V364.1H575.8V363.8H576.5V363.7H577.2V363.3H578V363.3H578.8V363.7H579.5V363.1H580.2V363.6H581V362.7H581.8V362.9H582.5V362.8H583.2V362.8H584V362.8H584.8V362.6H585.5V362.6H586.2V361.7H587V361.6H587.8V361.5H588.5V361.4H589.2V361.8H590V361.5H590.8V361.6H591.5V361.3H592.2V361.1H593V360.7H593.8V361.3H594.5V361.1H595.2V360.9H596V361.1H596.8V360.2H597.5V360.1H598.2V360H599V359.8H599.8V359.8H600.5V359.9H601.2V359.6H602V359H602.8V359.5H603.5V358.6H604.2V358.5H605V358.5H605.8V358.9H606.5V357.9H607.2V358.6H608V358H608.8V358H609.5V357.2H610.2V358.1H611V357.3H611.8V356.5H612.5V357.3H613.2V356.5H614V357H614.8V356.5H615.5V356.9H616.2V356.6H617V355.9H617.8V356H618.5V354.9H619.2V355.8H620V355.6H620.8V355.9H621.5V355.4H622.2V355H623V355.2H623.8V354.7H624.5V354.4H625.2V355.3H626V354.1H626.8V353.5H627.5V353.3H628.2V353.5H629V353.6H629.8V353.7H630.5V353H631.2V353.7H632V354.5H632.8V354H633.5V353.9H634.2V353.5H635V354.2H635.8V352.9H636.5V354H637.2V353.8H638V353.1H638.8V353.3H639.5V352.8H640.2V352.7H641V353H641.8V352.8H642.5V353H643.2V352.5H644V353.5H644.8V351.9H645.5V353H646.2V352.2H647V351.5H647.8V352.7H648.5V351.7H649.2V350.9H650V352.2H650.8V350.8H651.5V351.1H652.2V351.2H653V351.2H653.8V351H654.5V351.2H655.2V350.9H656V349.6H656.8V350.1H657.5V349.8H658.2V349.1H659V349.4H659.8V350.1H660.5V349.1H661.2V348.9H662V348.9H662.8V349H663.5V349.4H664.2V349.5H665V348H665.8V347.8H666.5V347.8H667.2V349H668V348.9H668.8V347.4H669.5V348.5H670.2V347.6H671V348.7H671.8V347.6H672.5V348.4H673.2V347.4H674V346.9H674.8V348.1H675.5V346.7H676.2V347.8H677V347H677.8V346.5H678.5V346.8H679.2V347.9H680V346.3H680.8V345.9H681.5V347.7H682.2V345.7H683V345.7H683.8V346H684.5V346.6H685.2V347.1H686V344.9H686.8V344.7H687.5V346.6H688.2V345.1H689V345.8H689.8V344.2H690.5V343.9H691.2V345.3H692V343.4H692.8V343.3H693.5V343.3H694.2V342.8H695V342H695.8V341.8H696.5V341.1H697.2V341.4H698V341.5H698.8V340.5H699.5V339H700.2V339.8H701V339.7H701.8V337.7H702.5V338.1H703.2V339.6H704V338.6H704.8V336.9H705.5V336H706.2V335.4H707V334.9H707.8V334.8H708.5V335.3H709.2V335.1H710V334H710.8V334.5H711.5V334.3H712.2V335.5H713V335.8H713.8V335.7H714.5V333.6H715.2V335.1H716V334.4H716.8V333.3H717.5V333.5H718.2V335.3H719V335.9H719.8V336.1H720.5V335.8H721.2V336.5H722V337.1H722.8V337.5H723.5V336.2H724.2V337.3H725V337.2H725.8V337.9H726.5V337.9H727.2V337.5H728V339.8H728.8V339.1H729.5V340.6H730.2V338.6H731V339H731.8V339.3H732.5V341.6H733.2V340.6H734V341.7H734.8V340.2H735.5V342.1H736.2V340.7H737V343.2H737.8V342.1H738.5V343.9H739.2V343H740V343.1H740.8V342.4H741.5V343.7H742.2V344.4H743V344.5H743.8V345.2H744.5V346.4H745.2V346.4H746V346.8H746.8V347H747.5V347.4H748.2V348.6H749V349.5H749.8V349.8H750.5V349.1H751.2V349.6H752V350.6H752.8V350.8H753.5V351.9H754.2V352.4H755V352.5H755.8V352.1H756.5V352.6H757.2V353.2H758V352.3H758.8V352.8H759.5V352.8H760.2V354H761V355.1H761.8V354.2H762.5V354.8H763.2V355.4H764V356.8H764.8V356.7H765.5V357H766.2V357.8H767V358.2H767.8V358.7H768.5V359.6H769.2V360.2H770V360.3H770.8V360.9H771.5V360.6H772.2V361.9H773V361.1H773.8V361.7H774.5V362.4H775.2V361.8H776V362H776.8V362.6H777.5V362.5H778.2V362.6H779V363H779.8V363.5H780.5V363.5H781.2V363.2H782V363.7H782.8V364.1H783.5V363.5H784.2V364H785V364H785.8V364.2H786.5V363.9H787.2V364.1H788V364.3H788.8V364.8H789.5V364.5H790.2V364.6H791V365H791.8V364.6H792.5V364.8H793.2V365H794V364.9H794.8V365.2H795.5V365.2H796.2V365H797V365H797.8V365.6H798.5V365.3H799.2V365.2H800V365.3H800.8V365.5H801.5V365.9H802.2V365.5H803V366.2H803.8V365.5H804.5V365.9H805.2V366H806V365.9H806.8V365.7H807.5V365.8H808.2V366H809V366.3H809.8V365.9H810.5V365.9H811.2V366H812V366.5H812.8V366H813.5V365.9H814.2V366.4H815V365.7H815.8V366.2H816.5V365.9H817.2V366.2H818V345H818.8V342.8H819.5V338.7H820.2V334.4H821V331.3H821.8V330.8H822.5V329.3H823.2V325.9H824V326.8H824.8V332.5H825.5V339H826.2V344.7H827V345.3H827.8V343.4H828.5V346.3H829.2V350.7H830V351.5H830.8V352H831.5V354.2H832.2V353.5H833V351.8H833.8V349.7H834.5V346.5H835.2V347.4H836V348.5H836.8V351.1H837.5V353.2H838.2V353.1H839V354.9H839.8V355.1H840.5V356.9H841.2V358H842V359.2H842.8V360.9H843.5V361H844.2V358.3H845V352.2H845.8V346.1H846.5V344.9H847.2V345.2H848V344.8H848.8V345.9H849.5V348.3H850.2V346.6H851V345.5H851.8V346.9H852.5V347.9H853.2V349.1H854V347.3H854.8V343.4H855.5V336.8H856.2V328H857V324.3H857.8V322.6H858.5V319.8H859.2V319.5H860V329H860.8V333.2H861.5V334.3H862.2V338.8H863V345.4H863.8V350.1H864.5V353.9H865.2V358.8H866V360.4H866.8V349.2H867.5V333.6H868.2V322.8H869V321.4H869.8V324.6H870.5V321.6H871.2V321.9H872V321.7H872.8V319.6H873.5V321.3H874.2V325.3H875V331.5H875.8V337.7H876.5V345.7H877.2V348.3H878V350.6H878.8V353.2H879.5V357.2H880.2V359.5H881V360.2H881.8V360H882.5V358.4H883.2V356.4H884V355.8H884.8V352.9H885.5V350.7H886.2V349.9H887V347.8H887.8V346.7H888.5V346.6H889.2V345.1H890V345.9H890.8V342.6H891.5V339.8H892.2V339.7H893V338.4H893.8V338.6H894.5V337.2H895.2V340.1H896V342.1H896.8V341.8H897.5V344.3H898.2V343.9H899V345.5H899.8V348H900.5V346.7H901.2V341.7H902V332.8H902.8V328.2H903.5V322.4H904.2V311.4H905V314.8H905.8V321.9H906.5V323.7H907.2V330.3H908V335.8H908.8V338.9H909.5V345.1H910.2V347.5H911V350.7H911.8V355H912.5V358H913.2V353.9H914V344.4H914.8V332.5H915.5V324.8H916.2V324.7H917V322.2H917.8V327H918.5V332.9H919.2V342.2H920V344.6H920.8V347.3H921.5V346.8H922.2V343.6H923V342.7H923.8V338.9H924.5V337.8H925.2V342.1H926V346.7H926.8V349.4H927.5V350.3H928.2V352.8H929V354.6H929.8V353.8H930.5V355.1H931.2V355.4H932V357.3H932.8V359.6H933.5V360.3H934.2V358.9H935V357.4H935.8V353.7H936.5V347.4H937.2V344.9H938V345.4H938.8V347.7H939.5V347.6H940.2V347H941V348.3H941.8V350.8H942.5V351.4H943.2V351.4H944V350.2H944.8V349.2H945.5V350.4H946.2V351.5H947V352.7H947.8V349.8H948.5V340.9H949.2V332.6H950V324.1H950.8V319.1H951.5V317.1H952.2V320H953V323.1H953.8V333.2H954.5V341.9H955.2V346.9H956V352.9H956.8V353.2H957.5V355.6H958.2V358.4H959V360.1H959.8V359.1H960.5V350.5H961.2V340H962V327.5H962.8V323.7H963.5V325H964.2V323.8H965V326.9H965.8V326.3H966.5V326.7H967.2V332.4H968V331H968.8V329H969.5V331.2H970.2V332.8H971V334.5H971.8V333.9H972.5V338.3H973.2V344.1H974V350.5H974.8V356.6H975.5V360.2H976.2V360.2H977V361.3H977.8V360.9H978.5V361.4H979.2V362.9H980V363.3H980.8V363.9H981.5V364.1H982.2V363.5H983V362.9H983.8V360.8H984.5V358.1H985.2V354.8H986V351.8H986.8V348.7H987.5V344.8H988.2V343.6H989V345.4H989.8V346.3H990.5V349.3H991.2V350.6H992V350.2H992.8V352.3H993.5V350.8H994.2V347.3H995V346.7H995.8V344.1H996.5V337.1H997.2V331.8H998V322.7H998.8V320H999.5V329.1H1000.2V331.6H1001V336.7H1001.8V341.7H1002.5V345.9H1003.2V350.9H1004V355H1004.8V358.5H1005.5V358.4H1006.2V359.3H1007V361.4H1007.8V360.4H1008.5V350.1H1009.2V334.4H1010V321.3H1010.8V319.5H1011.5V322.1H1012.2V321H1013V327.7H1013.8V326.8H1014.5V325.9H1015.2V330H1016V334.7H1016.8V338.8H1017.5V341.3H1018.2V340.5H1019V338.1H1019.8V340H1020.5V342.7H1021.2V344.5H1022V344.9H1022.8V345.4H1023.5V349H1024.2V351.3H1025V352.4H1025.8V353.4H1026.5V354.2H1027.2V353.5H1028V353.3H1028.8V355.2H1029.5V354.3H1030.2V355.5H1031V357.5H1031.8V359.2H1032.5V359.1H1033.2V359.8H1034V361.7H1034.8V363.7H1035.5V364H1036.2V364.4H1037V365.5H1037.8V366.3H1038.5V367.1H1039.2V368H1040V368.7H1040.8V369.8H1041.5V370.6H1042.2V370.7H1043V370.6H1043.8V371H1044.5V369.8H1045.2V364.3H1046V356.3H1046.8V352.7H1047.5V352.8H1048.2V353.9H1049V355.5H1049.8V354.6H1050.5V354.5H1051.2V355.4H1052V355.5H1052.8V356H1053.5V356.4H1054.2V358.1H1055V359.6H1055.8V359.7H1056.5V359H1057.2V355.8H1058V351.7H1058.8V346.3H1059.5V342.1H1060.2V341H1061V341.9H1061.8V345.2H1062.5V348.5H1063.2V349.4H1064V351.8H1064.8V351.8H1065.5V351.8H1066.2V351.8H1067V351.8H1067.8V351.8H1068.5V351.8H1069.2V351.8H1070V374.4H1070.8V374.4H1071.5V374.4H1072.2V374.4H1073V374.4H1073.8V374.4H1073V374.4H1072.2V374.4H1071.5V374.4H1070.8V374.4H1070V391.6H1069.2V391.6H1068.5V391.6H1067.8V391.6H1067V391.6H1066.2V391.6H1065.5V391.6H1064.8V391.6H1064V393.9H1063.2V394.5H1062.5V395H1061.8V399H1061V399.6H1060.2V400.8H1059.5V404H1058.8V405.1H1058V402.9H1057.2V399.3H1056.5V397.4H1055.8V398.1H1055V398.8H1054.2V398.4H1053.5V397.3H1052.8V397.6H1052V396.8H1051.2V397H1050.5V399.1H1049.8V400.7H1049V399.9H1048.2V399.7H1047.5V397.9H1046.8V392.5H1046V384.7H1045.2V378.7H1044.5V377.7H1043.8V378.1H1043V378.4H1042.2V378.8H1041.5V379.4H1040.8V379.7H1040V380.5H1039.2V381.4H1038.5V382.3H1037.8V383.1H1037V383.3H1036.2V384.3H1035.5V386.7H1034.8V388.6H1034V389.5H1033.2V391.8H1032.5V393.6H1031.8V394.9H1031V396.4H1030.2V397.1H1029.5V396.8H1028.8V399H1028V398.4H1027.2V397.9H1026.5V401.6H1025.8V402.2H1025V403.4H1024.2V406.9H1023.5V409.6H1022.8V409.1H1022V409.4H1021.2V411.2H1020.5V414.9H1019.8V416.6H1019V416.2H1018.2V416.3H1017.5V420.7H1016.8V421.1H1016V424.1H1015.2V424.9H1014.5V424.4H1013.8V424.4H1013V424.8H1012.2V421.4H1011.5V421.3H1010.8V416.5H1010V405.3H1009.2V392.4H1008.5V387.3H1007.8V389.6H1007V391H1006.2V391.8H1005.5V396.3H1004.8V400.5H1004V406.7H1003.2V412.7H1002.5V415.5H1001.8V423H1001V427.4H1000.2V431.1H999.5V434.5H998.8V426.6H998V414.5H997.2V406.3H996.5V399.3H995.8V392H995V390.3H994.2V393.1H993.5V394.3H992.8V395.7H992V396.6H991.2V396.5H990.5V397.7H989.8V400.3H989V401.6H988.2V398.5H987.5V397.5H986.8V396.1H986V392.1H985.2V389H984.5V388H983.8V388.4H983V388.3H982.2V388.5H981.5V389.2H980.8V390.6H980V392.8H979.2V393.8H978.5V395.1H977.8V396.2H977V396.5H976.2V397.1H975.5V398.7H974.8V401.5H974V402.3H973.2V405.3H972.5V409.6H971.8V411.9H971V414.6H970.2V416.1H969.5V419H968.8V421.5H968V423.5H967.2V423.9H966.5V424.7H965.8V423.8H965V423.7H964.2V418.9H963.5V417.8H962.8V412.5H962V405.3H961.2V397.2H960.5V390.3H959.8V391H959V394.3H958.2V394.3H957.5V396.1H956.8V399.5H956V406.2H955.2V416.3H954.5V425.3H953.8V429.3H953V432H952.2V434.1H951.5V432H950.8V427.9H950V418.7H949.2V409.4H948.5V404.4H947.8V401.3H947V396.8H946.2V394.1H945.5V395.6H944.8V394.5H944V392.8H943.2V394.5H942.5V393.7H941.8V392.5H941V395.3H940.2V397.7H939.5V400.3H938.8V403.4H938V404.5H937.2V398.8H936.5V392.5H935.8V391.5H935V390.7H934.2V392H933.5V393.5H932.8V392.1H932V393.6H931.2V393.5H930.5V393.7H929.8V395.1H929V395.7H928.2V395.1H927.5V397.3H926.8V397.4H926V399.2H925.2V401.3H924.5V400.4H923.8V401.7H923V401.5H922.2V402.5H921.5V401.7H920.8V403.3H920V405.7H919.2V406.1H918.5V406.3H917.8V411.1H917V415H916.2V417.6H915.5V410.1H914.8V401.4H914V396H913.2V391.3H912.5V393.6H911.8V398H911V404.5H910.2V410.2H909.5V411.6H908.8V414.9H908V419.4H907.2V424.9H906.5V432.4H905.8V428.4H905V419.6H904.2V414.3H903.5V410H902.8V404.4H902V399.8H901.2V395.1H900.5V395.2H899.8V395.3H899V396.7H898.2V399.4H897.5V401.2H896.8V403.6H896V406.1H895.2V404.8H894.5V405.9H893.8V405.5H893V404H892.2V401.7H891.5V402.2H890.8V401.5H890V399.5H889.2V400H888.5V399.9H887.8V398.9H887V397.6H886.2V395.3H885.5V393.1H884.8V391.4H884V389.5H883.2V387.8H882.5V387H881.8V387.6H881V388.5H880.2V391.5H879.5V395.3H878.8V398.6H878V400.6H877.2V403.7H876.5V407.4H875.8V410.4H875V413.8H874.2V417.6H873.5V420.8H872.8V421.9H872V427.5H871.2V431.7H870.5V433.1H869.8V425.8H869V416.9H868.2V409.7H867.5V399H866.8V390.4H866V391.2H865.2V394.7H864.5V399.4H863.8V404.3H863V408.9H862.2V410.3H861.5V415.6H860.8V419.6H860V416.5H859.2V416H858.5V417.8H857.8V415.1H857V407.4H856.2V403.8H855.5V400.3H854.8V395.2H854V394.7H853.2V394.7H852.5V395.6H851.8V397.3H851V397.6H850.2V400.4H849.5V403.8H848.8V406H848V404.6H847.2V405.3H846.5V401.7H845.8V399.2H845V395.6H844.2V395H843.5V396.3H842.8V398.2H842V400.1H841.2V401.1H840.5V403.1H839.8V404.4H839V404.7H838.2V406.1H837.5V405.9H836.8V407.2H836V404.5H835.2V402.5H834.5V402.2H833.8V400.5H833V398.6H832.2V394.8H831.5V393.6H830.8V396H830V401.5H829.2V405.8H828.5V410H827.8V413H827V418.4H826.2V419.9H825.5V419.1H824.8V415.8H824V409.9H823.2V407.8H822.5V403.1H821.8V397.5H821V392.3H820.2V389H819.5V392.4H818.8V394.9H818V383.5H817.2V383.4H816.5V383.7H815.8V383.5H815V383H814.2V383.1H813.5V382.7H812.8V382.5H812V383.1H811.2V382.8H810.5V382.8H809.8V382.7H809V383.2H808.2V382.8H807.5V382.8H806.8V383H806V383.1H805.2V382.8H804.5V383H803.8V383.1H803V383.4H802.2V383.6H801.5V383.4H800.8V383.4H800V383.5H799.2V383.1H798.5V383.6H797.8V383.8H797V384H796.2V384H795.5V384H794.8V383.8H794V383.7H793.2V383.7H792.5V384.1H791.8V384.4H791V384.3H790.2V383.9H789.5V384.2H788.8V384H788V384.4H787.2V384.2H786.5V384.6H785.8V384.8H785V384.8H784.2V385.4H783.5V385H782.8V384.7H782V385.1H781.2V385.2H780.5V385.1H779.8V385.9H779V386.1H778.2V385.9H777.5V386.6H776.8V386.4H776V386.7H775.2V387.2H774.5V387H773.8V387.9H773V387.8H772.2V388.6H771.5V388.6H770.8V388.6H770V389.7H769.2V389.5H768.5V389.8H767.8V390H767V390.9H766.2V391.1H765.5V392.6H764.8V392.1H764V393.2H763.2V393.6H762.5V393.8H761.8V394.6H761V395.1H760.2V395.5H759.5V394.4H758.8V395.4H758V396.7H757.2V397H756.5V396.2H755.8V397.3H755V396.6H754.2V397.5H753.5V398.5H752.8V398.9H752V398H751.2V398.7H750.5V398.6H749.8V400.5H749V400.3H748.2V400.5H747.5V401.1H746.8V401.8H746V401.8H745.2V403.7H744.5V403H743.8V404.9H743V405.8H742.2V404.4H741.5V404.2H740.8V405.7H740V406.6H739.2V406.6H738.5V407.3H737.8V405.1H737V407.5H736.2V406.1H735.5V406H734.8V408.2H734V408.4H733.2V409.1H732.5V407.6H731.8V407.9H731V409H730.2V408.4H729.5V407.9H728.8V410.2H728V410.3H727.2V410.8H726.5V412.2H725.8V410H725V412.4H724.2V410.6H723.5V410.9H722.8V411.6H722V413.9H721.2V414.2H720.5V414.2H719.8V412.5H719V414.5H718.2V414.5H717.5V412.1H716.8V414.2H716V414.6H715.2V414.4H714.5V413.8H713.8V414.3H713V413.9H712.2V411.5H711.5V413.5H710.8V414.1H710V413.5H709.2V412.6H708.5V413.1H707.8V411.2H707V412.9H706.2V413H705.5V412.5H704.8V412H704V411H703.2V410.7H702.5V410.7H701.8V411.3H701V408.7H700.2V410.2H699.5V409.4H698.8V409.5H698V408H697.2V407.5H696.5V408H695.8V407H695V406.8H694.2V405.7H693.5V404.2H692.8V406.1H692V404.7H691.2V403.6H690.5V404.8H689.8V403.6H689V403H688.2V403.7H687.5V404.5H686.8V402.4H686V404.3H685.2V402.5H684.5V402H683.8V403.1H683V402.9H682.2V401.4H681.5V402.9H680.8V401.5H680V403H679.2V402.8H678.5V401.1H677.8V402.6H677V401.1H676.2V401.4H675.5V401.6H674.8V401.8H674V401.6H673.2V401.1H672.5V401.2H671.8V401.2H671V401.4H670.2V401.9H669.5V401.8H668.8V401.9H668V401.6H667.2V401.2H666.5V400.8H665.8V400H665V400.3H664.2V399H663.5V399.4H662.8V400.1H662V398.7H661.2V398.7H660.5V399H659.8V399H659V399.4H658.2V398.6H657.5V397.6H656.8V399H656V398.5H655.2V398.7H654.5V398.7H653.8V396.8H653V396.7H652.2V397.8H651.5V397.9H650.8V398H650V396.5H649.2V397.7H648.5V396.3H647.8V397H647V397.1H646.2V397.3H645.5V397H644.8V396H644V395.7H643.2V395.8H642.5V396.2H641.8V395.7H641V394.8H640.2V395.6H639.5V396H638.8V395.4H638V394.8H637.2V396.1H636.5V395.4H635.8V395.7H635V395.8H634.2V395.5H633.5V394.5H632.8V395.4H632V394.9H631.2V395.6H630.5V394.4H629.8V395H629V394.5H628.2V394.4H627.5V395H626.8V393.8H626V394.7H625.2V394.7H624.5V394H623.8V393H623V393.2H622.2V393.3H621.5V394H620.8V393.2H620V393.4H619.2V393.6H618.5V392.6H617.8V392.3H617V391.9H616.2V392.8H615.5V392.4H614.8V392H614V392.3H613.2V391.2H612.5V392.1H611.8V391.4H611V391.6H610.2V391.3H609.5V391.1H608.8V390.4H608V390.5H607.2V389.9H606.5V390.4H605.8V389.2H605V389.3H604.2V389.8H603.5V389.7H602.8V389.1H602V389.2H601.2V388.3H600.5V388.5H599.8V388.3H599V388.4H598.2V387.7H597.5V388.2H596.8V388.1H596V387.5H595.2V387.7H594.5V387.9H593.8V386.9H593V387.3H592.2V387.5H591.5V387.4H590.8V386.4H590V386.8H589.2V386H588.5V386.8H587.8V386.5H587V385.8H586.2V386.4H585.5V385.9H584.8V386.1H584V385.9H583.2V385.5H582.5V386.1H581.8V385.7H581V385.9H580.2V385.9H579.5V385.6H578.8V385.2H578V384.8H577.2V384.5H576.5V384.6H575.8V384.5H575V383.7H574.2V383.9H573.5V383.7H572.8V383.4H572V382.9H571.2V383H570.5V383H569.8V382.9H569V382.9H568.2V383.3H567.5V383.6H566.8V383.3H566V383.9H565.2V383.5H564.5V374.4H563.8V393.9H563V388.3H562.2V389.9H561.5V390.6H560.8V390.5H560V392.4H559.2V391.5H558.5V395.5H557.8V393.8H557V395.9H556.2V401.1H555.5V398.5H554.8V402.3H554V405.2H553.2V405H552.5V401.6H551.8V397.7H551V397.3H550.2V398.6H549.5V399H548.8V398H548V396.8H547.2V398.1H546.5V395.9H545.8V397.8H545V400H544.2V401.2H543.5V399H542.8V400.2H542V396.4H541.2V390H540.5V381.1H539.8V377.2H539V378H538.2V378.2H537.5V378.5H536.8V379H536V379.7H535.2V379.7H534.5V381.1H533.8V381.5H533V382.8H532.2V383.3H531.5V383.3H530.8V384.9H530V387.9H529.2V389.1H528.5V389.7H527.8V393.2H527V393.9H526.2V395.5H525.5V396.9H524.8V397.2H524V396.6H523.2V400.6H522.5V396.9H521.8V398.5H521V403.7H520.2V401.2H519.5V404.8H518.8V408.2H518V410.5H517.2V408.2H516.5V410.1H515.8V411.9H515V416.9H514.2V416.4H513.5V416.1H512.8V416.5H512V423.6H511.2V419.4H510.5V427.2H509.8V423.3H509V425.2H508.2V423.9H507.5V425.4H506.8V418.8H506V423H505.2V412.2H504.5V400.7H503.8V386.8H503V387.6H502.2V390.9H501.5V391.1H500.8V392.3H500V399H499.2V401.5H498.5V410.2H497.8V414.4H497V416.3H496.2V427.5H495.5V427.4H494.8V433.5H494V435.1H493.2V421H492.5V410.2H491.8V403.7H491V396.4H490.2V389.1H489.5V391.1H488.8V394.4H488V394.2H487.2V396.6H486.5V396.6H485.8V396.5H485V398.6H484.2V401.5H483.5V401.6H482.8V396.5H482V398.1H481.2V394.8H480.5V390.2H479.8V388.1H479V387.9H478.2V388.7H477.5V388H476.8V388.9H476V389.4H475.2V391.3H474.5V393.8H473.8V393.8H473V395.9H472.2V396.3H471.5V396.7H470.8V397.3H470V399.7H469.2V402.7H468.5V402H467.8V407.5H467V411.1H466.2V412.5H465.5V416H464.8V416.2H464V420.9H463.2V421.9H462.5V424.6H461.8V423.5H461V425.5H460.2V422.7H459.5V424.3H458.8V415.2H458V419.5H457.2V407.9H456.5V403.6H455.8V392.9H455V388.6H454.2V392.6H453.5V395.4H452.8V393.6H452V397.8H451.2V400.6H450.5V409.9H449.8V420.6H449V428.5H448.2V429.8H447.5V433.4H446.8V434.5H446V430.3H445.2V426.2H444.5V413.7H443.8V406.6H443V403H442.2V400.2H441.5V394.4H440.8V393.9H440V396.8H439.2V393H438.5V392.6H437.8V395.7H437V392.4H436.2V392.6H435.5V397.1H434.8V398.2H434V401.8H433.2V404.5H432.5V404.4H431.8V395.1H431V390.7H430.2V392.1H429.5V389.8H428.8V393.5H428V393.6H427.2V391.2H426.5V395.2H425.8V392.3H425V394.7H424.2V395.3H423.5V395.9H422.8V394.5H422V399.1H421.2V396.2H420.5V401.1H419.8V401.3H419V399.9H418.2V403H417.5V400.5H416.8V403.8H416V400.3H415.2V405.3H414.5V405.9H413.8V406.2H413V406.4H412.2V414.2H411.5V415.6H410.8V419H410V404.2H409.2V399.5H408.5V393.7H407.8V389.6H407V396.3H406.2V399.2H405.5V408H404.8V411.6H404V411.6H403.2V417.1H402.5V420.8H401.8V427.6H401V435.6H400.2V423.5H399.5V417.1H398.8V412.4H398V408.4H397.2V401.7H396.5V398.5H395.8V392.9H395V396.7H394.2V394.4H393.5V398.3H392.8V400.1H392V401.9H391.2V404.8H390.5V406.9H389.8V403.5H389V407.5H388.2V404.2H387.5V403.9H386.8V400.2H386V403.6H385.2V400.1H384.5V399.1H383.8V400.5H383V399.6H382.2V398.4H381.5V397.1H380.8V394H380V392.5H379.2V390.6H378.5V388.8H377.8V387.1H377V386.9H376.2V388H375.5V388.9H374.8V393.3H374V396.7H373.2V399.9H372.5V401.2H371.8V405.5H371V408.7H370.2V411.6H369.5V415.3H368.8V419.1H368V421.9H367.2V421.9H366.5V431.3H365.8V432.1H365V433.7H364.2V420.5H363.5V414.6H362.8V406.4H362V394.1H361.2V387.9H360.5V393.4H359.8V395.6H359V402H358.2V405.8H357.5V410.9H356.8V409.9H356V419.5H355.2V419.7H354.5V414.4H353.8V417H353V418.4H352.2V412.9H351.5V403.7H350.8V403.9H350V397.9H349.2V393.3H348.5V395.6H347.8V394.2H347V396.6H346.2V397.7H345.5V397.5H344.8V402.4H344V404.8H343.2V406.9H342.5V403.1H341.8V406.8H341V398.3H340.2V399.7H339.5V392.8H338.8V396.4H338V396.3H337.2V399.4H336.5V400.6H335.8V401.4H335V404.2H334.2V404.5H333.5V404.8H332.8V407H332V405.2H331.2V408.6H330.5V401.7H329.8V403H329V401.7H328.2V399.8H327.5V397.7H326.8V392.9H326V394H325.2V397.3H324.5V404.4H323.8V406.8H323V412.2H322.2V413.6H321.5V421.6H320.8V418.9H320V419.3H319.2V413.6H318.5V407.5H317.8V408H317V399.9H316.2V396H315.5V389.8H314.8V388.5H314V395H313.2V394.9H312.5V429.1H311.8V432H311V432.4H310.2V429.8H309.5V431H308.8V429.3H308V429.7H307.2V426.8H306.5V428.7H305.8V427.5H305V425.2H304.2V425.4H303.5V422.4H302.8V422.7H302V421.2H301.2V421.1H300.5V420.3H299.8V419H299V418.1H298.2V415.6H297.5V414.5H296.8V412.9H296V412.3H295.2V413.1H294.5V410.8H293.8V410.4H293V411.6H292.2V408.9H291.5V410.4H290.8V409.7H290V409H289.2V407.9H288.5V407.9H287.8V407.4H287V406.7H286.2V405.4H285.5V405.6H284.8V403.6H284V403.4H283.2V402.3H282.5V403.2H281.8V402.6H281V403H280.2V402.9H279.5V402.1H278.8V401.8H278V401.6H277.2V401H276.5V400H275.8V401.2H275V400.4H274.2V400.7H273.5V399.7H272.8V399.5H272V399.8H271.2V398.5H270.5V399.9H269.8V398.6H269V399.4H268.2V397.6H267.5V399H266.8V397.8H266V398.2H265.2V396.8H264.5V398.3H263.8V398H263V397.9H262.2V396.2H261.5V396.6H260.8V396.9H260V397H259.2V396.3H258.5V397.5H257.8V396.8H257V397.1H256.2V397.4H255.5V396.7H254.8V397.2H254V397H253.2V396.1H252.5V396.5H251.8V395.9H251V397.2H250.2V395.5H249.5V397.1H248.8V395.9H248V396.8H247.2V396.3H246.5V396.5H245.8V396.4H245V396.3H244.2V396.3H243.5V396.5H242.8V397H242V395.6H241.2V395.9H240.5V397H239.8V397.6H239V397.2H238.2V397.6H237.5V397.4H236.8V397.5H236V397.9H235.2V398.6H234.5V398.4H233.8V397.8H233V399.4H232.2V399.6H231.5V398.5H230.8V399.4H230V399.3H229.2V398.7H228.5V399.9H227.8V398.8H227V400.5H226.2V400.7H225.5V401H224.8V399.6H224V401.4H223.2V400.8H222.5V400H221.8V400.9H221V401.8H220.2V401.2H219.5V399.9H218.8V398.9H218V396.3H217.2V396.8H216.5V395.2H215.8V393.4H215V392.5H214.2V391.4H213.5V391.1H212.8V389.8H212V388.9H211.2V387.2H210.5V386.2H209.8V385.2H209V384.2H208.2V382.4H207.5V381.8H206.8V380.6H206V379.2H205.2V378.1H204.5V377.1H203.8V375.9H203Z"/><path id="p3" d="M203 513.5V513.5H203.8V513.5H204.5V513.5H205.2V513.5H206V513.5H206.8V513.5H207.5V513.5H208.2V513.5H209V513.5H209.8V513.5H210.5V513.5H211.2V513.5H212V513.5H212.8V513.5H213.5V513.5H214.2V513.5H215V513.5H215.8V513.5H216.5V513.5H217.2V513.5H218V513.5H218.8V513.5H219.5V513.5H220.2V513.5H221V513.5H221.8V513.5H222.5V513.5H223.2V513.5H224V513.5H224.8V513.5H225.5V513.5H226.2V513.5H227V513.5H227.8V513.5H228.5V513.5H229.2V513.5H230V513.5H230.8V513.5H231.5V513.5H232.2V513.5H233V513.5H233.8V513.5H234.5V513.5H235.2V513.5H236V513.5H236.8V513.5H237.5V513.5H238.2V513.5H239V513.5H239.8V513.5H240.5V513.5H241.2V513.5H242V513.5H242.8V513.5H243.5V513.5H244.2V513.5H245V513.5H245.8V513.5H246.5V513.5H247.2V513.5H248V513.5H248.8V513.5H249.5V513.5H250.2V513.5H251V513.5H251.8V513.5H252.5V513.5H253.2V513.5H254V513.5H254.8V513.5H255.5V513.5H256.2V513.5H257V513.5H257.8V513.5H258.5V513.5H259.2V513.5H260V513.5H260.8V513.5H261.5V513.5H262.2V513.5H263V513.5H263.8V513.5H264.5V513.5H265.2V513.5H266V513.5H266.8V513.5H267.5V513.5H268.2V513.5H269V513.5H269.8V513.5H270.5V513.5H271.2V513.5H272V513.5H272.8V513.5H273.5V513.5H274.2V513.5H275V513.5H275.8V513.5H276.5V513.5H277.2V513.5H278V513.5H278.8V513.5H279.5V513.5H280.2V513.5H281V513.5H281.8V513.5H282.5V513.5H283.2V513.5H284V513.5H284.8V513.5H285.5V513.5H286.2V513.5H287V513.5H287.8V513.5H288.5V513.5H289.2V513.5H290V513.5H290.8V513.5H291.5V513.5H292.2V491.3H293V491H293.8V491.1H294.5V491H295.2V491.1H296V491H296.8V491.4H297.5V491.5H298.2V491.3H299V491.4H299.8V491H300.5V491.6H301.2V491.3H302V491H302.8V491.3H303.5V491.2H304.2V491.6H305V491.5H305.8V491H306.5V491.4H307.2V491H308V491.2H308.8V491.6H309.5V491H310.2V491.4H311V491.2H311.8V491H312.5V491.6H313.2V491.4H314V491.1H314.8V491H315.5V491.1H316.2V491.4H317V491.6H317.8V491.3H318.5V491H319.2V491H320V491.1H320.8V491.5H321.5V491H322.2V491.3H323V491H323.8V491.1H324.5V491.4H325.2V491.4H326V491H326.8V491H327.5V491.1H328.2V491.1H329V491.1H329.8V491.5H330.5V491H331.2V491.1H332V491.2H332.8V491.5H333.5V491.5H334.2V491H335V491.3H335.8V491.4H336.5V491.2H337.2V491.6H338V491H338.8V491.3H339.5V491.4H340.2V491.7H341V491H341.8V491.4H342.5V491.1H343.2V491.5H344V491.3H344.8V491.5H345.5V491H346.2V491.6H347V491.2H347.8V491.5H348.5V491.1H349.2V491H350V491.1H350.8V491.4H351.5V491.7H352.2V491.2H353V491.1H353.8V491.7H354.5V491.5H355.2V491.2H356V491.4H356.8V491.1H357.5V491.2H358.2V491.2H359V491.1H359.8V491H360.5V491.1H361.2V491.5H362V491.5H362.8V491.2H363.5V491.6H364.2V491H365V491.5H365.8V491.5H366.5V491H367.2V491.6H368V491.5H368.8V491.2H369.5V491.2H370.2V491.3H371V491.2H371.8V491H372.5V491.2H373.2V491.6H374V491.3H374.8V491.1H375.5V491.6H376.2V491.2H377V491H377.8V491.3H378.5V491H379.2V491.4H380V491.4H380.8V491H381.5V491.1H382.2V491.3H383V491H383.8V491.5H384.5V491.5H385.2V491H386V491.3H386.8V491.3H387.5V491.1H388.2V491.4H389V491.2H389.8V491.2H390.5V491.2H391.2V491.3H392V491H392.8V491.3H393.5V491H394.2V491.1H395V491.5H395.8V491.1H396.5V491.3H397.2V466.5H398V467.2H398.8V467.2H399.5V466.7H400.2V466.2H401V466.3H401.8V467.2H402.5V466.7H403.2V466.8H404V467.2H404.8V466.1H405.5V467H406.2V466.8H407V466.1H407.8V466.8H408.5V465.8H409.2V465.7H410V467.1H410.8V467.3H411.5V466.2H412.2V466.1H413V465.9H413.8V467.2H414.5V465.9H415.2V466.6H416V466.9H416.8V466.2H417.5V467.3H418.2V466.1H419V466.8H419.8V465.9H420.5V466.3H421.2V466.7H422V465.9H422.8V467H423.5V467.2H424.2V466H425V466.3H425.8V465.7H426.5V466.1H427.2V466.5H428V465.8H428.8V467.3H429.5V465.8H430.2V466.3H431V465.7H431.8V466H432.5V466.9H433.2V466.1H434V467H434.8V466.9H435.5V466.2H436.2V465.8H437V466.9H437.8V467.2H438.5V465.9H439.2V465.7H440V467H440.8V466.5H441.5V465.9H442.2V465.8H443V466.3H443.8V467.2H444.5V465.8H445.2V466.7H446V465.9H446.8V466.5H447.5V466.2H448.2V466.4H449V465.8H449.8V467H450.5V467.3H451.2V466.3H452V466.1H452.8V466.9H453.5V465.8H454.2V465.7H455V466.7H455.8V466.4H456.5V466.5H457.2V465.7H458V467H458.8V466.6H459.5V465.8H460.2V466.6H461V467.3H461.8V465.9H462.5V467.2H463.2V467.3H464V467H464.8V466.3H465.5V466.2H466.2V466.1H467V466.9H467.8V465.8H468.5V466.3H469.2V466.4H470V467.2H470.8V467.1H471.5V466.3H472.2V466.5H473V466.7H473.8V466.4H474.5V466H475.2V465.8H476V466.4H476.8V466.2H477.5V465.9H478.2V466H479V465.7H479.8V466.4H480.5V465.7H481.2V465.8H482V466.8H482.8V465.8H483.5V466.7H484.2V466.3H485V465.9H485.8V466.4H486.5V466.3H487.2V467.1H488V467.3H488.8V466.2H489.5V466.1H490.2V466.4H491V465.8H491.8V466.3H492.5V465.8H493.2V465.9H494V466.8H494.8V466.8H495.5V466.2H496.2V467.3H497V465.8H497.8V466H498.5V466.5H499.2V466.2H500V466.6H500.8V465.7H501.5V466.7H502.2V465.8H503V465.9H503.8V465.8H504.5V466.7H505.2V465.7H506V467.3H506.8V466.1H507.5V465.9H508.2V466H509V505.2H509.8V505.1H510.5V505.1H511.2V505.4H512V505.2H512.8V505.4H513.5V505.2H514.2V505.4H515V505.1H515.8V505.2H516.5V505.1H517.2V505.3H518V505.1H518.8V505.2H519.5V505.1H520.2V505.1H521V505.4H521.8V505.3H522.5V505.3H523.2V505.4H524V505.3H524.8V505.1H525.5V505.2H526.2V505.2H527V505.4H527.8V505.1H528.5V505.3H529.2V505.1H530V505.1H530.8V505.1H531.5V505.2H532.2V505.4H533V505.3H533.8V505.2H534.5V505.4H535.2V505.1H536V505.1H536.8V505.2H537.5V505.2H538.2V505.3H539V505.1H539.8V505.4H540.5V505.2H541.2V505.3H542V505.1H542.8V505.4H543.5V505.3H544.2V505.2H545V505.3H545.8V505.3H546.5V505.3H547.2V505.3H548V505.4H548.8V505.2H549.5V505.3H550.2V505.2H551V505.4H551.8V505.1H552.5V505.3H553.2V505.1H554V505.3H554.8V505.1H555.5V505.2H556.2V505.3H557V505.2H557.8V505.3H558.5V505.3H559.2V505.1H560V505.3H560.8V505.2H561.5V505.2H562.2V505.2H563V505.2H563.8V513.5H564.5V513.4H565.2V513.3H566V513.1H566.8V512.9H567.5V512.8H568.2V512.6H569V512.4H569.8V512.3H570.5V512.3H571.2V512.4H572V512.5H572.8V512.4H573.5V512.3H574.2V512.3H575V512.4H575.8V512.4H576.5V512.3H577.2V512.4H578V512.3H578.8V512.1H579.5V511.9H580.2V511.6H581V511.6H581.8V511.6H582.5V511.7H583.2V511.8H584V511.7H584.8V511.8H585.5V511.8H586.2V511.9H587V512H587.8V512H588.5V512.1H589.2V512.1H590V511.8H590.8V511.1H591.5V510.4H592.2V510.1H593V510.1H593.8V509.9H594.5V509.9H595.2V510.2H596V509.9H596.8V509.6H597.5V509.8H598.2V509.8H599V509.9H599.8V509.6H600.5V508.9H601.2V507.9H602V506.4H602.8V505.7H603.5V505.2H604.2V504.7H605V504.3H605.8V505.7H606.5V506.4H607.2V506.5H608V507.1H608.8V508.2H609.5V509H610.2V509.6H611V510.4H611.8V510.9H612.5V508.8H613.2V505.6H614V503.2H614.8V502.5H615.5V503.2H616.2V502.4H617V502.2H617.8V502.1H618.5V501.4H619.2V501.7H620V502.3H620.8V503.6H621.5V504.8H622.2V506.7H623V507.3H623.8V507.7H624.5V508.3H625.2V509.2H626V509.8H626.8V509.9H627.5V509.8H628.2V509.4H629V508.8H629.8V508.6H630.5V507.8H631.2V507.1H632V506.8H632.8V506.2H633.5V505.7H634.2V505.7H635V505.1H635.8V505.3H636.5V504.3H637.2V503.3H638V503.2H638.8V502.6H639.5V502.7H640.2V502.1H641V502.8H641.8V503.5H642.5V503.1H643.2V503.9H644V503.7H644.8V504H645.5V504.8H646.2V504.4H647V502.8H647.8V499.7H648.5V497.7H649.2V496H650V491.8H650.8V492.4H651.5V495H652.2V495.4H653V497.5H653.8V499.6H654.5V500.4H655.2V502.7H656V503.5H656.8V504.5H657.5V506.1H658.2V507.3H659V505.9H659.8V502.2H660.5V497.7H661.2V494H662V494.2H662.8V492.6H663.5V494.5H664.2V496.4H665V500.4H665.8V501.2H666.5V502.2H667.2V502.2H668V500.6H668.8V500.3H669.5V498.6H670.2V497.8H671V499.5H671.8V501.4H672.5V502.6H673.2V502.9H674V503.8H674.8V504.8H675.5V504.2H676.2V504.8H677V504.8H677.8V505.6H678.5V506.7H679.2V507H680V506.3H680.8V505.6H681.5V504H682.2V500.8H683V499.4H683.8V499.4H684.5V500.6H685.2V500.5H686V500.1H686.8V500.5H687.5V501.8H688.2V502H689V502H689.8V501.3H690.5V500.7H691.2V501.2H692V501.7H692.8V502.2H693.5V501.1H694.2V496.2H695V491.9H695.8V487H696.5V484.3H697.2V482.7H698V484.3H698.8V485.4H699.5V490.6H700.2V495.7H701V498H701.8V501.6H702.5V501.7H703.2V502.8H704V504.5H704.8V505.3H705.5V505.1H706.2V500.1H707V494.3H707.8V486.8H708.5V483.9H709.2V484.9H710V483.7H710.8V485.5H711.5V485.2H712.2V484.8H713V488.3H713.8V487.7H714.5V485.9H715.2V487.3H716V487.9H716.8V489.2H717.5V488.4H718.2V491H719V494.4H719.8V498.4H720.5V502H721.2V504.6H722V504.4H722.8V505.2H723.5V504.8H724.2V505.1H725V506H725.8V506.3H726.5V506.6H727.2V506.8H728V506.3H728.8V506H729.5V504.5H730.2V502.8H731V500.5H731.8V498.4H732.5V496.3H733.2V493.6H734V492.3H734.8V493.6H735.5V494.1H736.2V495.9H737V497.1H737.8V496.5H738.5V498H739.2V497.1H740V494.5H740.8V493.8H741.5V492.3H742.2V487.1H743V483.2H743.8V476.9H744.5V473.4H745.2V480.5H746V482.1H746.8V485.5H747.5V489.3H748.2V492.1H749V495.9H749.8V498.7H750.5V501.7H751.2V501.4H752V502H752.8V503.5H753.5V503.2H754.2V495.8H755V483.7H755.8V473.1H756.5V470.6H757.2V473.4H758V471.4H758.8V477H759.5V476.4H760.2V475.1H761V478.2H761.8V481.8H762.5V485H763.2V486.9H764V486.5H764.8V484.2H765.5V485.6H766.2V487.7H767V489H767.8V489.5H768.5V489.5H769.2V492.5H770V494.4H770.8V495.2H771.5V496H772.2V496.6H773V496.2H773.8V495.5H774.5V497.4H775.2V496.4H776V497.4H776.8V498.9H777.5V500.5H778.2V500.3H779V500.8H779.8V502.3H780.5V504.1H781.2V504.5H782V504.7H782.8V505.7H783.5V506.3H784.2V507H785V507.8H785.8V508.3H786.5V509.3H787.2V510.1H788V510.2H788.8V510.1H789.5V510.4H790.2V509.6H791V504.8H791.8V497.4H792.5V493.5H793.2V493.7H794V494.4H794.8V496H795.5V495.2H796.2V494.9H797V495.8H797.8V495.8H798.5V496.2H799.2V496.5H800V497.9H800.8V499.5H801.5V499.5H802.2V498.9H803V495.9H803.8V492H804.5V486.8H805.2V482.4H806V481.1H806.8V481.8H807.5V484.7H808.2V488.1H809V488.9H809.8V489.3H810.5V489H811.2V490.3H812V489.5H812.8V485.9H813.5V484.4H814.2V483.8H815V479.6H815.8V475.8H816.5V471.3H817.2V470.5H818V471H818.8V466.9H819.5V465H820.2V470.4H821V476.5H821.8V483.5H822.5V487H823.2V483.3H824V484.4H824.8V490.1H825.5V492.2H826.2V491.1H827V494.2H827.8V494.9H828.5V492.2H829.2V492.5H830V487.3H830.8V487.9H831.5V489.2H832.2V490.1H833V494.9H833.8V492.6H834.5V496H835.2V495.2H836V497.1H836.8V498.4H837.5V499H838.2V500.9H839V502.1H839.8V500.6H840.5V496.8H841.2V489.3H842V487.2H842.8V487.8H843.5V487.8H844.2V487H845V491H845.8V490.5H846.5V487.8H847.2V489.6H848V490H848.8V491.7H849.5V491.9H850.2V488.1H851V485.6H851.8V475.7H852.5V472.3H853.2V469.7H854V470.5H854.8V463.9H855.5V473.5H856.2V479.2H857V479.6H857.8V481.7H858.5V488.1H859.2V492.3H860V495.9H860.8V498.4H861.5V504.5H862.2V498.9H863V484.9H863.8V474.8H864.5V468.8H865.2V475.4H866V472.2H866.8V471.3H867.5V473.8H868.2V470H869V472H869.8V472.8H870.5V479.6H871.2V481.6H872V490.8H872.8V492.7H873.5V495H874.2V496.1H875V499.6H875.8V501.9H876.5V503.1H877.2V502.7H878V502.8H878.8V500H879.5V500.7H880.2V498.6H881V496.5H881.8V496H882.5V495.3H883.2V492.8H884V494.7H884.8V491.9H885.5V493.6H886.2V492.6H887V488.5H887.8V490.1H888.5V487.7H889.2V489.4H890V487.4H890.8V488.2H891.5V492.3H892.2V489.9H893V493.1H893.8V492.9H894.5V492.8H895.2V495.8H896V495.5H896.8V494H897.5V488.2H898.2V482.5H899V483.6H899.8V472.8H900.5V471.6H901.2V479.3H902V479.5H902.8V482.6H903.5V489H904.2V488.6H905V494.4H905.8V495.8H906.5V497.6H907.2V500.1H908V503.3H908.8V503.3H909.5V497.2H910.2V491.9H911V481.7H911.8V485.5H912.5V480H913.2V484.8H914V485.3H914.8V493.7H915.5V495.2H916.2V496.8H917V498.7H917.8V495.3H918.5V495.9H919.2V494H920V491.6H920.8V493.9H921.5V496.8H922.2V499.2H923V499.7H923.8V500.3H924.5V503.1H925.2V501.6H926V502.9H926.8V502.8H927.5V503.5H928.2V505.1H929V506.1H929.8V505.6H930.5V504.5H931.2V504.3H932V499.9H932.8V498.3H933.5V497.6H934.2V499.6H935V499.8H935.8V499.5H936.5V499.4H937.2V501.4H938V501.8H938.8V502.1H939.5V501.9H940.2V500.8H941V501.4H941.8V502.2H942.5V502.5H943.2V503.7H944V498.5H944.8V495.8H945.5V490.4H946.2V488.7H947V485.8H947.8V488.3H948.5V488.3H949.2V492.1H950V498.4H950.8V499.2H951.5V503.8H952.2V503.9H953V504.3H953.8V506.5H954.5V506.5H955.2V508.4H956V504.5H956.8V501.1H957.5V495.2H958.2V491.1H959V493.5H959.8V491.7H960.5V493.5H961.2V494.5H962V492.7H962.8V496.1H963.5V497H964.2V494.6H965V496.5H965.8V496.3H966.5V498.5H967.2V497.1H968V498.9H968.8V500.8H969.5V503.6H970.2V505.7H971V508.4H971.8V507.9H972.5V508.8H973.2V508.6H974V508.5H974.8V509.3H975.5V509.5H976.2V509.6H977V510.1H977.8V509.6H978.5V509.8H979.2V509.2H980V508.5H980.8V507.4H981.5V506.4H982.2V505.6H983V504.4H983.8V503.2H984.5V504.2H985.2V504.4H986V505.1H986.8V506.5H987.5V505.7H988.2V506.7H989V506.9H989.8V505.6H990.5V505.2H991.2V505.6H992V503.3H992.8V502H993.5V500.4H994.2V496.6H995V500.7H995.8V501.3H996.5V502.5H997.2V504.4H998V505.2H998.8V507H999.5V507.8H1000.2V509.5H1001V509.4H1001.8V509.5H1002.5V510H1003.2V510.7H1004V509.2H1004.8V505.4H1005.5V501.9H1006.2V499.8H1007V502.3H1007.8V500.4H1008.5V502.9H1009.2V503.3H1010V502.6H1010.8V503.5H1011.5V504.7H1012.2V505.8H1013V506.5H1013.8V507H1014.5V506.1H1015.2V506.5H1016V507.2H1016.8V507.6H1017.5V508.1H1018.2V507.8H1019V508.6H1019.8V509.3H1020.5V509.5H1021.2V509.8H1022V510H1022.8V510.2H1023.5V509.7H1024.2V510.5H1025V510.2H1025.8V510.5H1026.5V510.7H1027.2V511.2H1028V511.2H1028.8V511.3H1029.5V511.6H1030.2V512H1031V512.1H1031.8V512.1H1032.5V512.3H1033.2V512.5H1034V512.5H1034.8V512.7H1035.5V512.8H1036.2V512.9H1037V513.1H1037.8V513.1H1038.5V513.1H1039.2V513.1H1040V513.2H1040.8V512.9H1041.5V512.1H1042.2V511.5H1043V511.6H1043.8V511.7H1044.5V512H1045.2V512H1046V512H1046.8V512.1H1047.5V512.2H1048.2V512.3H1049V512.3H1049.8V512.4H1050.5V512.7H1051.2V512.7H1052V512.8H1052.8V512.7H1053.5V512.6H1054.2V512.4H1055V512.2H1055.8V512.3H1056.5V512.4H1057.2V512.5H1058V512.8H1058.8V512.9H1059.5V513H1060.2V513H1061V513.1H1061.8V513.2H1062.5V513.2H1063.2V513.3H1064V513.4H1064.8V513.5H1065.5V513.5H1066.2V513.5H1067V513.5H1067.8V513.5H1068.5V513.5H1069.2V513.5H1070V513.5H1070.8V513.5H1071.5V513.5H1072.2V513.5H1073V513.5H1073.8V513.5H1073V513.5H1072.2V513.5H1071.5V513.5H1070.8V513.5H1070V513.5H1069.2V513.5H1068.5V513.5H1067.8V513.5H1067V513.5H1066.2V513.5H1065.5V513.5H1064.8V513.6H1064V513.6H1063.2V513.7H1062.5V513.7H1061.8V513.8H1061V513.8H1060.2V513.9H1059.5V514H1058.8V514H1058V514.2H1057.2V514.4H1056.5V514.4H1055.8V514.6H1055V514.8H1054.2V514.9H1053.5V514.8H1052.8V514.7H1052V514.7H1051.2V514.9H1050.5V515H1049.8V515H1049V515H1048.2V515.1H1047.5V515.1H1046.8V515.3H1046V515.5H1045.2V515.7H1044.5V515.6H1043.8V515.8H1043V515.5H1042.2V515H1041.5V514.1H1040.8V513.8H1040V513.9H1039.2V513.9H1038.5V513.9H1037.8V514H1037V514.1H1036.2V514.1H1035.5V514.3H1034.8V514.4H1034V514.6H1033.2V514.6H1032.5V514.7H1031.8V514.9H1031V515.4H1030.2V515.6H1029.5V515.7H1028.8V516.3H1028V516.4H1027.2V516.7H1026.5V517H1025.8V517.1H1025V517.1H1024.2V517.8H1023.5V517.3H1022.8V517.6H1022V518.6H1021.2V518.2H1020.5V519H1019.8V519.7H1019V520.2H1018.2V519.9H1017.5V520.3H1016.8V520.8H1016V521.9H1015.2V521.9H1014.5V522H1013.8V522.2H1013V523.8H1012.2V523.1H1011.5V524.9H1010.8V524.2H1010V524.7H1009.2V524.6H1008.5V525.1H1007.8V523.7H1007V524.8H1006.2V522.4H1005.5V519.8H1004.8V516.5H1004V516.7H1003.2V517.6H1002.5V517.7H1001.8V518H1001V519.8H1000.2V520.5H999.5V522.9H998.8V524.1H998V524.8H997.2V527.9H996.5V528.1H995.8V529.9H995V530.5H994.2V526.7H993.5V523.8H992.8V522H992V520H991.2V517.8H990.5V518.5H989.8V519.5H989V519.5H988.2V520.3H987.5V520.4H986.8V520.4H986V521.2H985.2V522.2H984.5V522.3H983.8V520.7H983V521.3H982.2V520.3H981.5V518.8H980.8V518.1H980V518.1H979.2V518.4H978.5V518.2H977.8V518.5H977V518.8H976.2V519.5H975.5V520.5H974.8V520.5H974V521.3H973.2V521.5H972.5V521.7H971.8V522H971V523H970.2V524.2H969.5V524H968.8V526.3H968V527.7H967.2V528.4H966.5V529.9H965.8V530.1H965V532.1H964.2V532.6H963.5V533.9H962.8V533.6H962V534.5H961.2V533.5H960.5V534.4H959.8V530.7H959V532.6H958.2V527.8H957.5V526.1H956.8V521.5H956V519.7H955.2V521.5H954.5V522.8H953.8V522H953V524H952.2V525.3H951.5V529.6H950.8V534.6H950V538.3H949.2V539.1H948.5V541H947.8V541.6H947V539.9H946.2V538.1H945.5V532.2H944.8V528.9H944V527.3H943.2V526H942.5V523.3H941.8V523.1H941V524.6H940.2V522.8H939.5V522.6H938.8V524.3H938V522.6H937.2V522.8H936.5V525.1H935.8V525.8H935V527.7H934.2V529.2H933.5V529.3H932.8V524.4H932V522.2H931.2V522.9H930.5V521.8H929.8V523.8H929V523.9H928.2V522.6H927.5V524.9H926.8V523.4H926V524.8H925.2V525.2H924.5V525.6H923.8V524.8H923V527.5H922.2V525.9H921.5V528.8H920.8V529H920V528.2H919.2V530.1H918.5V528.7H917.8V530.7H917V528.8H916.2V531.9H915.5V532.3H914.8V532.5H914V532.8H913.2V537.6H912.5V538.5H911.8V540.8H911V531.8H910.2V529H909.5V525.5H908.8V523H908V527.2H907.2V529.1H906.5V534.7H905.8V537.1H905V537.2H904.2V540.9H903.5V543.4H902.8V547.9H902V553.3H901.2V545.6H900.5V541.5H899.8V538.5H899V536H898.2V531.6H897.5V529.6H896.8V525.9H896V528.5H895.2V527H894.5V529.7H893.8V531H893V532.3H892.2V534.4H891.5V536H890.8V533.7H890V536.6H889.2V534.4H888.5V534.2H887.8V531.7H887V534.2H886.2V531.8H885.5V531.2H884.8V532.2H884V531.7H883.2V530.9H882.5V530H881.8V527.8H881V526.7H880.2V525.4H879.5V524.2H878.8V522.9H878V522.8H877.2V523.7H876.5V524.4H875.8V527.7H875V530.4H874.2V532.9H873.5V533.9H872.8V537.3H872V539.9H871.2V542.2H870.5V545.2H869.8V548.3H869V550.6H868.2V550.7H867.5V558.3H866.8V559H866V560.5H865.2V550.1H864.5V545.6H863.8V539.2H863V529.3H862.2V524.4H861.5V528.9H860.8V530.7H860V536H859.2V539.2H858.5V543.5H857.8V542.8H857V550.8H856.2V551.2H855.5V546.9H854.8V549.2H854V550.5H853.2V546H852.5V538.3H851.8V538.5H851V533.5H850.2V529.7H849.5V531.7H848.8V530.5H848V532.7H847.2V533.7H846.5V533.6H845.8V538H845V540.1H844.2V542H843.5V538.8H842.8V542.2H842V534.8H841.2V536.1H840.5V530H839.8V533.2H839V533.2H838.2V536.1H837.5V537.3H836.8V538.1H836V540.7H835.2V541H834.5V541.4H833.8V543.5H833V541.9H832.2V545.2H831.5V538.9H830.8V540.2H830V539H829.2V537.3H828.5V535.5H827.8V531H827V532.1H826.2V535.2H825.5V542.1H824.8V544.5H824V549.7H823.2V551.2H822.5V559H821.8V556.6H821V557.1H820.2V551.7H819.5V545.8H818.8V546.4H818V538.5H817.2V534.8H816.5V528.7H815.8V527.5H815V534H814.2V534H813.5V528.4H812.8V529.4H812V529.5H811.2V530.6H810.5V530.7H809.8V533H809V533.1H808.2V533.8H807.5V537.8H806.8V537.7H806V539.2H805.2V542.3H804.5V543H803.8V540.6H803V537H802.2V535.4H801.5V536H800.8V536.6H800V536H799.2V534.9H798.5V535.3H797.8V534.3H797V534.7H796.2V536.6H795.5V537.9H794.8V536.9H794V536.9H793.2V534.8H792.5V529.7H791.8V522.3H791V517.2H790.2V516.5H789.5V516.9H788.8V517.1H788V517.5H787.2V518H786.5V518.2H785.8V519H785V519.7H784.2V520.5H783.5V521.1H782.8V521.3H782V522.2H781.2V524.3H780.5V525.9H779.8V526.5H779V528.6H778.2V530H777.5V531.1H776.8V532.3H776V532.7H775.2V532.4H774.5V534.4H773.8V533.4H773V533.2H772.2V536.4H771.5V536.4H770.8V537.6H770V540.4H769.2V542.5H768.5V541.7H767.8V542.1H767V543.4H766.2V546.5H765.5V547.4H764.8V547H764V547H763.2V550.8H762.5V550.3H761.8V553.2H761V553H760.2V552.8H759.5V552.5H758.8V552.8H758V549.6H757.2V549.9H756.5V545.3H755.8V536.6H755V526.5H754.2V523.3H753.5V525.1H752.8V526H752V526.6H751.2V530.2H750.5V533.1H749.8V537.9H749V542H748.2V543.8H747.5V549.7H746.8V552.2H746V555H745.2V557.1H744.5V550.5H743.8V541.8H743V536H742.2V530.9H741.5V525.6H740.8V524.8H740V526.8H739.2V527.4H738.5V528.4H737.8V528.9H737V528.8H736.2V529.7H735.5V531.4H734.8V532H734V529.7H733.2V529.2H732.5V528H731.8V525.1H731V523.1H730.2V522.5H729.5V522.8H728.8V522.6H728V522.8H727.2V523.2H726.5V524.1H725.8V525.5H725V526H724.2V526.8H723.5V527.4H722.8V527.6H722V527.8H721.2V528.9H720.5V530.6H719.8V530.8H719V532.9H718.2V535.4H717.5V536.6H716.8V538.2H716V538.8H715.2V540.6H714.5V541.8H713.8V543H713V542.9H712.2V543.4H711.5V542.5H710.8V542.4H710V539.1H709.2V538.8H708.5V535.1H707.8V531.1H707V526.1H706.2V522.4H705.5V523H704.8V524.8H704V524.6H703.2V525.7H702.5V527.5H701.8V531.3H701V536.8H700.2V541.5H699.5V543.2H698.8V544.6H698V545.5H697.2V544H696.5V541.6H695.8V536.3H695V531.6H694.2V529H693.5V527.3H692.8V524.8H692V523.6H691.2V524.4H690.5V523.5H689.8V522.7H689V523.6H688.2V523H687.5V522.4H686.8V523.9H686V524.9H685.2V526.2H684.5V527.6H683.8V527.9H683V524.8H682.2V521.9H681.5V521.6H680.8V521H680V521.8H679.2V522.3H678.5V521.5H677.8V522.3H677V522H676.2V522.2H675.5V522.7H674.8V522.9H674V522.5H673.2V523.6H672.5V523.4H671.8V524.3H671V525H670.2V524.5H669.5V525.1H668.8V524.8H668V525.2H667.2V524.7H666.5V525.5H665.8V526.2H665V526.3H664.2V526.3H663.5V528.3H662.8V529.5H662V530.5H661.2V527H660.5V523.8H659.8V521.6H659V519.8H658.2V520.9H657.5V522.4H656.8V524.8H656V526.7H655.2V527H654.5V528.3H653.8V529.7H653V531.6H652.2V534.1H651.5V532H650.8V529H650V527.1H649.2V525.5H648.5V523.4H647.8V521.9H647V520.2H646.2V520.4H645.5V520.2H644.8V520.8H644V521.5H643.2V522H642.5V522.7H641.8V523.4H641V522.8H640.2V523.1H639.5V522.8H638.8V522.3H638V521.5H637.2V521.7H636.5V521.3H635.8V520.7H635V520.8H634.2V520.6H633.5V520.3H632.8V519.8H632V519.1H631.2V518.5H630.5V518H629.8V517.4H629V516.9H628.2V516.7H627.5V516.9H626.8V517H626V517.8H625.2V518.7H624.5V519.4H623.8V519.8H623V520.5H622.2V521.2H621.5V521.8H620.8V522.5H620V523.2H619.2V523.8H618.5V523.8H617.8V525H617V525.6H616.2V525.7H615.5V523.8H614.8V522H614V520.4H613.2V518.2H612.5V516.5H611.8V516.8H611V517.3H610.2V518.2H609.5V519H608.8V519.7H608V519.8H607.2V520.7H606.5V521.1H605.8V520.4H605V520.3H604.2V520.5H603.5V519.8H602.8V518.5H602V517.9H601.2V517.3H600.5V516.5H599.8V516.4H599V516.3H598.2V516.4H597.5V516.6H596.8V516.5H596V516.8H595.2V517.2H594.5V517.3H593.8V517H593V517.1H592.2V516.5H591.5V516.2H590.8V515.7H590V515.6H589.2V515.7H588.5V515.8H587.8V515.9H587V515.9H586.2V516H585.5V516H584.8V516H584V516H583.2V515.9H582.5V515.9H581.8V515.6H581V515.4H580.2V515.3H579.5V515.1H578.8V514.9H578V514.6H577.2V514.5H576.5V514.6H575.8V514.8H575V514.9H574.2V514.9H573.5V514.9H572.8V515H572V514.9H571.2V514.8H570.5V514.5H569.8V514.3H569V514.1H568.2V514H567.5V513.8H566.8V513.7H566V513.6H565.2V513.6H564.5V513.5H563.8V521.4H563V521.5H562.2V521.6H561.5V521.6H560.8V521.3H560V521.4H559.2V521.3H558.5V521.3H557.8V521.4H557V521.5H556.2V521.4H555.5V521.6H554.8V521.3H554V521.4H553.2V521.4H552.5V521.4H551.8V521.4H551V521.5H550.2V521.3H549.5V521.4H548.8V521.4H548V521.6H547.2V521.6H546.5V521.5H545.8V521.4H545V521.5H544.2V521.4H543.5V521.4H542.8V521.6H542V521.6H541.2V521.5H540.5V521.5H539.8V521.4H539V521.4H538.2V521.6H537.5V521.6H536.8V521.6H536V521.5H535.2V521.4H534.5V521.5H533.8V521.5H533V521.4H532.2V521.6H531.5V521.5H530.8V521.6H530V521.5H529.2V521.3H528.5V521.6H527.8V521.5H527V521.4H526.2V521.5H525.5V521.6H524.8V521.5H524V521.6H523.2V521.3H522.5V521.3H521.8V521.6H521V521.4H520.2V521.5H519.5V521.4H518.8V521.5H518V521.5H517.2V521.5H516.5V521.4H515.8V521.5H515V521.5H514.2V521.4H513.5V521.6H512.8V521.5H512V521.6H511.2V521.4H510.5V521.4H509.8V521.6H509V561H508.2V560.2H507.5V560.9H506.8V560.9H506V560.8H505.2V559.8H504.5V560.5H503.8V560.4H503V560.4H502.2V560.7H501.5V560.8H500.8V560.5H500V560.1H499.2V559.8H498.5V559.6H497.8V560.7H497V559.9H496.2V559.4H495.5V559.5H494.8V560.6H494V560.1H493.2V559.4H492.5V560.6H491.8V561H491V560.5H490.2V561H489.5V560.8H488.8V560.7H488V560.5H487.2V560H486.5V560H485.8V560.5H485V560.4H484.2V560.8H483.5V559.6H482.8V560.6H482V560.2H481.2V560H480.5V560.4H479.8V559.6H479V561H478.2V560.2H477.5V560.8H476.8V560.8H476V559.5H475.2V559.4H474.5V559.4H473.8V560.7H473V561H472.2V560.2H471.5V559.4H470.8V560.4H470V559.8H469.2V560.3H468.5V560.8H467.8V559.9H467V559.4H466.2V559.5H465.5V561H464.8V560.5H464V560H463.2V559.6H462.5V560.4H461.8V560.9H461V560H460.2V560.4H459.5V560.9H458.8V560.3H458V560.7H457.2V560.9H456.5V560.4H455.8V559.7H455V561H454.2V560.7H453.5V560.5H452.8V560.9H452V560.8H451.2V560.6H450.5V560.7H449.8V561H449V561H448.2V560.8H447.5V559.8H446.8V559.9H446V559.8H445.2V560.3H444.5V560H443.8V560.7H443V560H442.2V560.1H441.5V560.6H440.8V560.8H440V559.9H439.2V560.8H438.5V560.2H437.8V561H437V560.9H436.2V560.4H435.5V560.6H434.8V559.4H434V560.7H433.2V560.8H432.5V560.3H431.8V560.3H431V560.9H430.2V560.9H429.5V560.6H428.8V560.8H428V560.3H427.2V560H426.5V561H425.8V560.6H425V559.8H424.2V560.9H423.5V559.4H422.8V560.8H422V560.3H421.2V561H420.5V560.9H419.8V560.9H419V559.8H418.2V559.5H417.5V560.9H416.8V559.5H416V560.7H415.2V560.1H414.5V560.4H413.8V561H413V560.6H412.2V560.9H411.5V559.4H410.8V561H410V560.2H409.2V559.7H408.5V560.3H407.8V559.9H407V560.5H406.2V560.6H405.5V560.7H404.8V560.5H404V560.8H403.2V560.9H402.5V560H401.8V559.6H401V560.2H400.2V559.9H399.5V559.9H398.8V560.8H398V560.4H397.2V535.5H396.5V535.9H395.8V535.8H395V536H394.2V535.3H393.5V536H392.8V535.9H392V535.7H391.2V535.4H390.5V535.8H389.8V536H389V535.6H388.2V536H387.5V535.9H386.8V536H386V536H385.2V535.9H384.5V535.5H383.8V536H383V536H382.2V535.3H381.5V535.9H380.8V535.5H380V535.4H379.2V536H378.5V535.8H377.8V535.8H377V535.9H376.2V535.9H375.5V535.5H374.8V536H374V535.7H373.2V535.4H372.5V536H371.8V535.5H371V535.4H370.2V535.6H369.5V535.8H368.8V535.5H368V535.8H367.2V536H366.5V535.5H365.8V535.7H365V535.5H364.2V535.8H363.5V535.3H362.8V536H362V536H361.2V535.5H360.5V535.5H359.8V535.7H359V535.8H358.2V535.7H357.5V536H356.8V535.6H356V536H355.2V535.5H354.5V536H353.8V535.6H353V535.5H352.2V536H351.5V535.5H350.8V536H350V535.9H349.2V535.9H348.5V535.9H347.8V535.6H347V535.6H346.2V536H345.5V536H344.8V535.4H344V535.7H343.2V536H342.5V535.6H341.8V535.8H341V536H340.2V535.4H339.5V535.7H338.8V535.4H338V535.5H337.2V535.9H336.5V536H335.8V535.6H335V535.5H334.2V535.9H333.5V535.7H332.8V536H332V535.6H331.2V535.9H330.5V536H329.8V535.9H329V535.5H328.2V535.5H327.5V535.3H326.8V535.9H326V536H325.2V536H324.5V535.9H323.8V535.4H323V535.9H322.2V535.4H321.5V535.8H320.8V535.6H320V535.8H319.2V535.9H318.5V535.7H317.8V535.6H317V535.5H316.2V535.3H315.5V536H314.8V535.6H314V535.9H313.2V535.4H312.5V535.9H311.8V535.9H311V535.8H310.2V535.6H309.5V536H308.8V535.3H308V535.7H307.2V535.5H306.5V535.9H305.8V535.6H305V535.9H304.2V535.3H303.5V535.7H302.8V536H302V535.8H301.2V535.8H300.5V535.7H299.8V535.9H299V536H298.2V535.9H297.5V536H296.8V535.4H296V535.4H295.2V535.9H294.5V535.3H293.8V535.3H293V535.9H292.2V513.5H291.5V513.5H290.8V513.5H290V513.5H289.2V513.5H288.5V513.5H287.8V513.5H287V513.5H286.2V513.5H285.5V513.5H284.8V513.5H284V513.5H283.2V513.5H282.5V513.5H281.8V513.5H281V513.5H280.2V513.5H279.5V513.5H278.8V513.5H278V513.5H277.2V513.5H276.5V513.5H275.8V513.5H275V513.5H274.2V513.5H273.5V513.5H272.8V513.5H272V513.5H271.2V513.5H270.5V513.5H269.8V513.5H269V513.5H268.2V513.5H267.5V513.5H266.8V513.5H266V513.5H265.2V513.5H264.5V513.5H263.8V513.5H263V513.5H262.2V513.5H261.5V513.5H260.8V513.5H260V513.5H259.2V513.5H258.5V513.5H257.8V513.5H257V513.5H256.2V513.5H255.5V513.5H254.8V513.5H254V513.5H253.2V513.5H252.5V513.5H251.8V513.5H251V513.5H250.2V513.5H249.5V513.5H248.8V513.5H248V513.5H247.2V513.5H246.5V513.5H245.8V513.5H245V513.5H244.2V513.5H243.5V513.5H242.8V513.5H242V513.5H241.2V513.5H240.5V513.5H239.8V513.5H239V513.5H238.2V513.5H237.5V513.5H236.8V513.5H236V513.5H235.2V513.5H234.5V513.5H233.8V513.5H233V513.5H232.2V513.5H231.5V513.5H230.8V513.5H230V513.5H229.2V513.5H228.5V513.5H227.8V513.5H227V513.5H226.2V513.5H225.5V513.5H224.8V513.5H224V513.5H223.2V513.5H222.5V513.5H221.8V513.5H221V513.5H220.2V513.5H219.5V513.5H218.8V513.5H218V513.5H217.2V513.5H216.5V513.5H215.8V513.5H215V513.5H214.2V513.5H213.5V513.5H212.8V513.5H212V513.5H211.2V513.5H210.5V513.5H209.8V513.5H209V513.5H208.2V513.5H207.5V513.5H206.8V513.5H206V513.5H205.2V513.5H204.5V513.5H203.8V513.5H203Z"/><path id="po" d="M174 593.4V593.4H174.8V593.4H175.6V593.1H176.3V592.9H177.1V592.8H177.9V592.5H178.7V592.3H179.4V592.1H180.2V591.9H181V591.7H181.8V591.5H182.5V591.2H183.3V591.2H184.1V591H184.8V590.7H185.6V590.4H186.4V590.3H187.2V590.1H188V589.8H188.7V589.7H189.5V589.6H190.3V589.5H191.1V589.2H191.8V588.8H192.6V588.9H193.4V588.9H194.2V588.9H194.9V589.1H195.7V589.1H196.5V589.1H197.2V589.3H198V589.5H198.8V589.5H199.6V589.2H200.3V589.2H201.1V589.1H201.9V589.2H202.7V589.4H203.5V589.1H204.2V589.3H205V589.3H205.8V589.5H206.6V589.8H207.3V589.7H208.1V589.8H208.9V589.9H209.7V589.7H210.4V589.8H211.2V589.8H212V589.8H212.8V589.8H213.5V589.8H214.3V590.1H215.1V589.9H215.8V589.9H216.6V590.1H217.4V590.1H218.2V590.1H219V590.2H219.7V589.9H220.5V590H221.3V590.1H222.1V590.2H222.8V589.9H223.6V590.1H224.4V590H225.2V590H225.9V590.1H226.7V590.1H227.5V589.9H228.2V589.9H229V590.1H229.8V590H230.6V590H231.3V589.8H232.1V589.9H232.9V589.8H233.7V589.8H234.5V589.8H235.2V589.8H236V589.8H236.8V589.7H237.6V589.7H238.3V589.6H239.1V589.8H239.9V589.8H240.7V589.7H241.4V589.5H242.2V589.6H243V589.6H243.8V589.4H244.5V589.4H245.3V589.6H246.1V589.5H246.8V589.5H247.6V589.2H248.4V589.2H249.2V589.4H250V589.3H250.7V589.1H251.5V589H252.3V588.9H253.1V589H253.8V588.8H254.6V588.8H255.4V588.6H256.1V588.7H256.9V588.4H257.7V588.6H258.5V588.2H259.2V588.1H260V588.3H260.8V588H261.6V587.9H262.4V587.7H263.1V587.6H263.9V587.6H264.7V587.5H265.5V587.5H266.2V587.2H267V587.2H267.8V587H268.5V587H269.3V587H270.1V587.1H270.9V586.9H271.6V586.4H272.4V586.4H273.2V586.6H274V586.4H274.8V585.8H275.5V585.6H276.3V585.6H277.1V585.4H277.9V585H278.6V584.9H279.4V584.8H280.2V585H281V584.5H281.7V584.9H282.5V584.8H283.3V584.3H284V584.7H284.8V584H285.6V584.2H286.4V583.9H287.1V588.8H287.9V588.6H288.7V587.9H289.5V587.2H290.2V586.4H291V586.3H291.8V586.3H292.6V585.6H293.4V585.2H294.1V586.1H294.9V587.2H295.7V588.4H296.5V589H297.2V588.4H298V588.5H298.8V589.6H299.5V589.9H300.3V589.7H301.1V589.9H301.9V589.9H302.6V589.9H303.4V589.9H304.2V589H305V589H305.8V589.3H306.5V589.4H307.3V590H308.1V589.9H308.9V590H309.6V589.9H310.4V590H311.2V590H312V589.9H312.7V590H313.5V589.9H314.3V590H315V590H315.8V589.1H316.6V588.7H317.4V588.8H318.1V588.8H318.9V588.6H319.7V589.3H320.5V589.2H321.2V588.7H322V589H322.8V589.1H323.6V589.4H324.4V589.4H325.1V588.6H325.9V588.1H326.7V586.1H327.5V585.4H328.2V584.8H329V584.9H329.8V583.5H330.5V585.5H331.3V586.7H332.1V586.7H332.9V587.1H333.6V588.4H334.4V589.3H335.2V589.9H336V589.9H336.8V589.9H337.5V590H338.3V587.6H339.1V585.4H339.9V584.1H340.6V585.5H341.4V584.8H342.2V584.5H343V585H343.7V584.2H344.5V584.6H345.3V584.7H346V586.2H346.8V586.6H347.6V588.7H348.4V589.1H349.1V589.6H349.9V589.8H350.7V590H351.5V589.9H352.2V590H353V589.9H353.8V589.9H354.6V590H355.4V589.9H356.1V590H356.9V589.8H357.7V589.6H358.5V589.5H359.2V588.8H360V589.3H360.8V588.6H361.5V589H362.3V588.7H363.1V587.7H363.9V588.1H364.6V587.4H365.4V587.8H366.2V587.3H367V587.5H367.8V588.5H368.5V587.8H369.3V588.6H370.1V588.6H370.9V588.5H371.6V589.3H372.4V589.2H373.2V588.8H374V587.2H374.7V585.7H375.5V585.8H376.3V583.1H377V582.7H377.8V584.7H378.6V584.7H379.4V585.5H380.1V585.7H380.9V585.7H381.7V585.8H382.5V585.6H383.2V585.8H384V585.7H384.8V585.6H385.6V585.7H386.4V585.6H387.1V585.5H387.9V584.8H388.7V585.8H389.5V584.3H390.2V585.6H391V585.6H391.8V585.8H392.5V585.6H393.3V585.7H394.1V585.8H394.9V585.6H395.6V585.8H396.4V585.6H397.2V585.7H398V585.6H398.8V585.6H399.5V585.7H400.3V585.6H401.1V585.8H401.9V585.8H402.6V585.6H403.4V585.6H404.2V585.5H405V585.6H405.7V585.7H406.5V585.6H407.3V585.8H408V585.6H408.8V585.6H409.6V585.5H410.4V585.6H411.1V585.8H411.9V585.6H412.7V585.8H413.5V585.8H414.2V585.6H415V585.6H415.8V585.8H416.6V585.8H417.4V585.6H418.1V585.6H418.9V585.8H419.7V585.7H420.5V585.6H421.2V585.6H422V585.6H422.8V585.8H423.5V585.4H424.3V584.7H425.1V583.6H425.9V584.4H426.6V584.4H427.4V585.7H428.2V585.6H429V585.8H429.8V585.8H430.5V585.6H431.3V585.6H432.1V585.7H432.9V585.6H433.6V585.6H434.4V585.7H435.2V585.7H436V585.7H436.7V584.7H437.5V585.6H438.3V584.8H439V585.5H439.8V585.7H440.6V585H441.4V585.6H442.1V585.8H442.9V585.7H443.7V585.8H444.5V585.6H445.2V585.6H446V585.6H446.8V585.7H447.6V585.6H448.4V585.7H449.1V585.7H449.9V585.8H450.7V585.8H451.5V585.6H452.2V585.7H453V585.7H453.8V585.7H454.5V585.6H455.3V585.6H456.1V585.7H456.9V585.6H457.6V585.6H458.4V585.6H459.2V585.5H460V585.7H460.8V585.6H461.5V585.6H462.3V585.7H463.1V585.6H463.9V585.7H464.6V585.6H465.4V585.6H466.2V585.7H467V585.7H467.7V585.8H468.5V585.8H469.3V585.6H470V585.6H470.8V585.7H471.6V585.6H472.4V585.7H473.1V585.6H473.9V583.4H474.7V585.7H475.5V585.7H476.2V585.6H477V585.8H477.8V585.6H478.6V585.6H479.4V585.7H480.1V585.6H480.9V585.7H481.7V585.6H482.5V585.7H483.2V585.6H484V585.6H484.8V585.6H485.5V585.3H486.3V583.6H487.1V585.4H487.9V583.9H488.6V585.6H489.4V585.6H490.2V585.2H491V585.8H491.8V586.6H492.5V587.4H493.3V588H494.1V588.3H494.9V587.5H495.6V587.6H496.4V588.2H497.2V588.5H498V588.8H498.7V588.5H499.5V589.2H500.3V589.7H501V589.9H501.8V590.1H502.6V590.2H503.4V590.4H504.1V589.9H504.9V590.6H505.7V590.3H506.5V590.4H507.2V590.7H508V591.2H508.8V591.1H509.6V591.2H510.4V591.4H511.1V591.9H511.9V592H512.7V592H513.4V592.2H514.2V592.4H515V592.4H515.8V592.4H516.5V592.4H517.3V592.4H518.1V592.4H518.9V592.4H519.6V592.4H520.4V592.4H521.2V592.4H522V592.4H522.8V591.1H523.5V590H524.3V590.1H525.1V590H525.9V590.6H526.6V590.5H527.4V590.3H528.2V590.5H528.9V590.5H529.7V590.6H530.5V590.6H531.3V590.8H532V591.3H532.8V591.2H533.6V591.3H534.4V590.8H535.1V590.2H535.9V589.3H536.7V588.3H537.5V588H538.2V588H539V588.4H539.8V589.3H540.6V589.4H541.4V589.6H542.1V589.4H542.9V589.7H543.7V589.8H544.4V589.2H545.2V588.6H546V588.5H546.8V586.8H547.5V583.7H548.3V584.3H549.1V586.8H549.9V587.2H550.6V588.1H551.4V588.9H552.2V589.3H553V590.1H553.8V590.7H554.5V591H555.3V591.1H556.1V589H556.9V587.8H557.6V587H558.4V584.3H559.2V584.8H559.9V585.1H560.7V584.5H561.5V586H562.3V585.4H563V585.9H563.8V587.2H564.6V586.5H565.4V588.1H566.1V587.5H566.9V588H567.7V588.5H568.5V588.8H569.2V588.8H570V588.9H570.8V588.3H571.6V588.5H572.4V587.9H573.1V587.2H573.9V588.2H574.7V588.4H575.4V588.1H576.2V588.4H577V589.2H577.8V589.4H578.5V589.2H579.3V589.9H580.1V589.8H580.9V589.1H581.6V589H582.4V588.9H583.2V589.1H584V588.3H584.8V588.6H585.5V588.6H586.3V589H587.1V589.7H587.9V589.8H588.6V590.1H589.4V590.4H590.2V590.8H590.9V590.6H591.7V591.1H592.5V591H593.3V591H594V590.8H594.8V591H595.6V589.6H596.4V589H597.1V588.1H597.9V586.7H598.7V587.3H599.5V586.1H600.2V585.9H601V585.5H601.8V586.2H602.6V586.7H603.4V588H604.1V587.7H604.9V587.2H605.7V588H606.4V588.5H607.2V588.7H608V587.9H608.8V587H609.5V586H610.3V585.7H611.1V585H611.9V585.5H612.6V584.6H613.4V584H614.2V584.9H615V584.7H615.8V585.2H616.5V585.3H617.3V586.7H618.1V586.5H618.9V588.2H619.6V588.1H620.4V588.6H621.2V589.8H621.9V590.2H622.7V590.2H623.5V589.4H624.3V589.9H625V589.8H625.8V589.1H626.6V589.5H627.4V589.8H628.1V589.8H628.9V590H629.7V590.2H630.5V589.9H631.2V590.1H632V590H632.8V589.8H633.6V590H634.4V589.9H635.1V589.7H635.9V589.8H636.7V588.1H637.4V586.8H638.2V587.2H639V587.8H639.8V587H640.5V587.3H641.3V587.4H642.1V588.2H642.9V587.7H643.6V588H644.4V588.7H645.2V588.9H646V589.2H646.8V589.4H647.5V589.4H648.3V588.4H649.1V588.4H649.9V588.3H650.6V588.4H651.4V587.2H652.2V588H652.9V587H653.7V587.6H654.5V587.8H655.3V588.9H656V589.1H656.8V589.2H657.6V589.4H658.4V589.2H659.1V589.3H659.9V589.1H660.7V589.1H661.5V589.3H662.2V589H663V589.2H663.8V589.1H664.6V589H665.4V589H666.1V589.2H666.9V588.9H667.7V588.9H668.4V589.2H669.2V588.8H670V588.8H670.8V588.9H671.5V589H672.3V589.1H673.1V588.7H673.9V588.7H674.6V589H675.4V588.7H676.2V588.9H677V588.6H677.8V588.5H678.5V588.8H679.3V588.4H680.1V588.4H680.9V588.4H681.6V588.3H682.4V588.2H683.2V588.2H683.9V588H684.7V588.1H685.5V588.1H686.3V587.9H687V587.7H687.8V587.8H688.6V587.8H689.4V587.5H690.1V587.5H690.9V587.8H691.7V587.6H692.5V587.3H693.2V587.2H694V587.1H694.8V587H695.6V587H696.4V587H697.1V587H697.9V586.8H698.7V586.9H699.4V586.7H700.2V585.5H701V585.4H701.8V585.9H702.5V586.8H703.3V587H704.1V586.9H704.9V586.7H705.6V586.7H706.4V587H707.2V587.2H708V587.2H708.8V587.1H709.5V587.3H710.3V587.4H711.1V587.4H711.9V587.2H712.6V587.4H713.4V587.4H714.2V587.5H714.9V587.5H715.7V587.4H716.5V587.8H717.3V587.7H718V588H718.8V587.6H719.6V587.7H720.4V587.7H721.1V588.1H721.9V588H722.7V588.1H723.5V587.9H724.2V588.2H725V588H725.8V586.8H726.6V587.3H727.4V586H728.1V586.7H728.9V588.4H729.7V588.3H730.4V588.5H731.2V588.6H732V588.6H732.8V587.5H733.5V586.9H734.3V588.1H735.1V588.4H735.9V589H736.6V589.1H737.4V589.3H738.2V589.5H739V589.4H739.8V589.4H740.5V589.5H741.3V589.7H742.1V589.7H742.9V589.9H743.6V590H744.4V588.7H745.2V586.8H745.9V586.4H746.7V586.9H747.5V586.5H748.3V587H749V586.3H749.8V585H750.6V585.7H751.4V584.8H752.1V584.9H752.9V585.7H753.7V587.4H754.5V587.9H755.2V587.8H756V588.7H756.8V588.8H757.6V589.5H758.4V589.7H759.1V590.2H759.9V590.5H760.7V590.6H761.4V589.7H762.2V588.6H763V587.2H763.8V585.1H764.5V585.5H765.3V585.8H766.1V586.1H766.9V585.3H767.6V586.7H768.4V586.2H769.2V586.7H770V587.3H770.8V588.5H771.5V589.2H772.3V589.3H773.1V590H773.9V590H774.6V589.3H775.4V588.3H776.2V587.9H776.9V588H777.7V588.6H778.5V588.9H779.3V589.1H780V589.5H780.8V589.3H781.6V589.8H782.4V589.6H783.1V590.1H783.9V589.7H784.7V590.1H785.5V589.8H786.2V589.9H787V590.6H787.8V590.2H788.6V590.2H789.4V590.6H790.1V590.9H790.9V590.9H791.7V591.2H792.4V591.3H793.2V591.1H794V590.8H794.8V590.1H795.5V589.2H796.3V588.4H797.1V588.2H797.9V588.3H798.6V588.8H799.4V589.4H800.2V589.5H801V589.6H801.8V589.6H802.5V589.8H803.3V589.6H804.1V589H804.9V588.8H805.6V588.7H806.4V588H807.2V587.3H807.9V586.5H808.7V586.4H809.5V586.5H810.3V585.8H811V585.4H811.8V586.4H812.6V586.3H813.4V586.3H814.1V586H814.9V585.4H815.7V585.6H816.5V586.6H817.2V587.7H818V588.7H818.8V588.8H819.6V588.4H820.4V589H821.1V589.7H821.9V589.3H822.7V589.4H823.4V589.6H824.2V589.8H825V589.9H825.8V589.5H826.5V589H827.3V589.1H828.1V589.3H828.9V589.8H829.6V590.1H830.4V590.1H831.2V590.4H832V590.5H832.8V590.8H833.5V589.6H834.3V589.3H835.1V589.4H835.9V589.4H836.6V589.2H837.4V589.9H838.2V588.9H838.9V588.7H839.7V588.8H840.5V588.7H841.3V588.9H842V589.3H842.8V589H843.6V588.8H844.4V587.3H845.1V586.7H845.9V586.2H846.7V586.4H847.5V585.2H848.2V586.9H849V585.8H849.8V585.1H850.6V584.9H851.4V584.4H852.1V584.3H852.9V586H853.7V586.7H854.4V586.9H855.2V587.7H856V588.8H856.8V587.1H857.5V586.1H858.3V587.2H859.1V586.7H859.9V586.5H860.6V586.8H861.4V584.9H862.2V584.7H863V585.2H863.8V584.7H864.5V584.7H865.3V584.7H866.1V584.3H866.9V584.6H867.6V585.3H868.4V586.4H869.2V587.5H869.9V588.8H870.7V589.3H871.5V589.7H872.3V590.1H873V590.8H873.8V591.2H874.6V590.9H875.4V590.8H876.1V590.7H876.9V590.2H877.7V590.6H878.5V590.1H879.2V589.7H880V589.6H880.8V589.2H881.6V589H882.4V589H883.1V588.7H883.9V588.9H884.7V588.3H885.4V587.8H886.2V587.8H887V587.6H887.8V587.6H888.5V587.4H889.3V587.9H890.1V588.2H890.9V588.2H891.6V588.6H892.4V588.4H893.2V588.6H894V586.8H894.8V586.6H895.5V587.9H896.3V586.6H897.1V585.8H897.9V584.8H898.6V582.9H899.4V583.5H900.2V584.7H900.9V585H901.7V586.2H902.5V587.1H903.3V587.7H904V588.7H904.8V589.2H905.6V588.3H906.4V589H907.1V588H907.9V588.9H908.7V588.6H909.5V586.6H910.2V585.2H911V585.2H911.8V584.8H912.6V585.6H913.4V586.6H914.1V588.2H914.9V588.7H915.7V589.1H916.4V589H917.2V588.5H918V588.3H918.8V587.7H919.5V587.5H920.3V588.2H921.1V589H921.9V589.5H922.6V589.6H923.4V590.1H924.2V590.4H925V590.2H925.8V590.5H926.5V590.5H927.3V590.8H928.1V591H928.9V591H929.6V591H930.4V590.9H931.2V590.2H931.9V589.1H932.7V588.7H933.5V588.8H934.3V589.2H935V589.2H935.8V589.1H936.6V589.3H937.4V589.7H938.1V589.8H938.9V589.8H939.7V589.6H940.5V589.5H941.2V589.7H942V589.5H942.8V589H943.6V589.4H944.4V588H945.1V586.6H945.9V585.1H946.7V584.2H947.4V583.9H948.2V584.4H949V584.9H949.8V586.7H950.5V588.2H951.3V589.1H952.1V590.1H952.9V590.1H953.6V590.5H954.4V589.9H955.2V590.3H956V590H956.8V589.7H957.5V587.9H958.3V585.7H959.1V585H959.9V585.3H960.6V585.1H961.4V585.6H962.2V585.5H962.9V585.6H963.7V586.5H964.5V586.3H965.3V586H966V586.3H966.8V586.6H967.6V586.9H968.4V586.8H969.1V587.6H969.9V588.6H970.7V589.7H971.5V590.7H972.2V591.4H973V591.4H973.8V591.5H974.6V591.5H975.4V591.6H976.1V591.8H976.9V591.9H977.7V592H978.4V592H979.2V591.9H980V591.8H980.8V591.4H981.5V591H982.3V590.4H983.1V589.9H983.9V589.4H984.6V588.7H985.4V588.5H986.2V588.8H987V589H987.8V589.5H988.5V589.7H989.3V589.6H990.1V590H990.9V589.7H991.6V589.1H992.4V589H993.2V588.6H993.9V587.4H994.7V586.4H995.5V584.9H996.3V584.4H997V586H997.8V586.4H998.6V587.3H999.4V588.2H1000.1V588.9H1000.9V589.7H1001.7V590.4H1002.5V591.1H1003.2V591H1004V591.2H1004.8V591.6H1005.6V591.4H1006.4V589.6H1007.1V586.9H1007.9V584.6H1008.7V584.3H1009.4V584.8H1010.2V584.6H1011V585.7H1011.8V585.6H1012.5V585.4H1013.3V586.1H1014.1V586.9H1014.9V587.6H1015.6V588.1H1016.4V587.9H1017.2V587.5H1018V587.9H1018.8V588.3H1019.5V588.6H1020.3V588.7H1021.1V588.8H1021.9V589.4H1022.6V589.8H1023.4V590H1024.2V590.2H1025V590.3H1025.7V590.2H1026.5V590.2H1027.3V590.5H1028.1V590.3H1028.8V590.5H1029.6V590.9H1030.4V591.2H1031.2V591.2H1031.9V591.3H1032.7V591.6H1033.5V591.9H1034.2V592H1035V592.1H1035.8V592.3H1036.6V592.4H1037.4V592.5H1038.1V592.7H1038.9V592.8H1039.7V593H1040.5V593.1H1041.2V593.2H1042V593.1H1042.8V593.2H1043.6V593H1044.3V592H1045.1V590.7H1045.9V590H1046.7V590.1H1047.4V590.3H1048.2V590.5H1049V590.4H1049.8V590.4H1050.5V590.5H1051.3V590.5H1052.1V590.6H1052.9V590.7H1053.6V591H1054.4V591.3H1055.2V591.3H1056V591.1H1056.7V590.6H1057.5V589.9H1058.3V588.9H1059.1V588.2H1059.8V588H1060.6V588.2H1061.4V588.8H1062.2V589.3H1062.9V589.5H1063.7V589.9H1064.5V589.9H1065.2V589.9H1066V589.9H1066.8V589.9H1067.6V589.9H1068.4V589.9H1069.1V589.9H1069.9V593.4H1070.7V593.4H1071.5V593.4H1072.2V593.4H1073V593.4H1073.8V594.2H1073V594.2H1072.2V594.2H1071.5V594.2H1070.7V594.2H1069.9V596.8H1069.1V596.8H1068.3V596.8H1067.6V596.8H1066.8V596.8H1066V596.8H1065.2V596.8H1064.5V596.8H1063.7V597.2H1062.9V597.3H1062.2V597.4H1061.4V598H1060.6V598.1H1059.8V598.4H1059V598.9H1058.3V599.1H1057.5V598.7H1056.7V598.1H1056V597.8H1055.2V597.9H1054.4V598H1053.6V597.9H1052.8V597.7H1052.1V597.8H1051.3V597.7H1050.5V597.7H1049.8V598.1H1049V598.3H1048.2V598.2H1047.4V598.2H1046.7V597.9H1045.9V596.9H1045.1V595.6H1044.3V594.6H1043.5V594.4H1042.8V594.4H1042V594.5H1041.2V594.6H1040.5V594.7H1039.7V594.7H1038.9V594.9H1038.1V595H1037.3V595.2H1036.6V595.3H1035.8V595.3H1035V595.5H1034.2V595.9H1033.5V596.3H1032.7V596.4H1031.9V596.8H1031.2V597.1H1030.4V597.3H1029.6V597.6H1028.8V597.7H1028V597.7H1027.3V598H1026.5V597.9H1025.7V597.9H1025V598.5H1024.2V598.6H1023.4V598.8H1022.6V599.4H1021.9V599.9H1021.1V599.8H1020.3V599.8H1019.5V600.2H1018.8V600.8H1018V601.1H1017.2V601H1016.4V601H1015.6V601.8H1014.9V601.9H1014.1V602.4H1013.3V602.5H1012.5V602.4H1011.8V602.4H1011V602.5H1010.2V601.9H1009.5V601.9H1008.7V601.1H1007.9V599.1H1007.1V596.9H1006.4V596H1005.6V596.4H1004.8V596.7H1004V596.8H1003.2V597.6H1002.5V598.3H1001.7V599.4H1000.9V600.4H1000.1V600.9H999.4V602.2H998.6V603H997.8V603.6H997V604.2H996.3V602.8H995.5V600.7H994.7V599.3H994V598.1H993.2V596.8H992.4V596.7H991.6V597H990.9V597.2H990.1V597.5H989.3V597.6H988.5V597.6H987.8V597.8H987V598.3H986.2V598.5H985.4V598H984.6V597.8H983.9V597.6H983.1V596.9H982.3V596.3H981.5V596.1H980.8V596.2H980V596.2H979.2V596.2H978.5V596.4H977.7V596.6H976.9V597H976.1V597.2H975.4V597.4H974.6V597.6H973.8V597.6H973V597.7H972.2V598H971.5V598.5H970.7V598.6H969.9V599.1H969.1V599.9H968.4V600.3H967.6V600.7H966.8V601H966V601.5H965.3V601.9H964.5V602.3H963.7V602.4H963V602.5H962.2V602.3H961.4V602.3H960.6V601.5H959.9V601.3H959.1V600.4H958.3V599.1H957.5V597.7H956.8V597.4H956V596.8H955.2V597.2H954.4V597.2H953.6V597.5H952.9V598.1H952.1V599.3H951.3V601H950.5V602.6H949.8V603.3H949V603.7H948.2V604.1H947.5V603.7H946.7V603H945.9V601.4H945.1V599.8H944.4V599H943.6V598.7H942.8V598.4H942V598H941.2V597.5H940.5V597.3H939.7V597H938.9V597.3H938.1V597.1H937.4V596.9H936.6V597.4H935.8V597.8H935V598.3H934.3V598.8H933.5V599H932.7V598H932V596.9H931.2V596.8H930.4V596.6H929.6V596.8H928.9V597.1H928.1V596.9H927.3V597.1H926.5V597.1H925.8V597.1H925V597.4H924.2V597.5H923.4V597.4H922.6V597.7H921.9V597.8H921.1V598.1H920.3V598.4H919.5V598.3H918.8V598.5H918V598.5H917.2V598.6H916.5V598.5H915.7V598.8H914.9V599.2H914.1V599.3H913.4V599.3H912.6V600.1H911.8V600.8H911V601.3H910.2V600H909.5V598.5H908.7V597.5H907.9V598H907.1V598.1H906.4V598.5H905.6V599H904.8V600H904V600.2H903.3V600.8H902.5V601.6H901.7V602.5H901V603.8H900.2V603.1H899.4V601.6H898.6V600.7H897.9V599.9H897.1V599.7H896.3V600.7H895.5V599.3H894.8V598.6H894V598.1H893.2V597.7H892.4V598.1H891.6V598.4H890.9V598.8H890.1V599.3H889.3V599.1H888.5V599.2H887.8V599.2H887V598.9H886.2V598.5H885.5V598.6H884.7V598.5H883.9V598.1H883.1V598.2H882.4V598.2H881.6V598H880.8V597.8H880V597.4H879.2V597H878.5V597H877.7V596.9H876.9V596.8H876.1V596.7H875.4V596.3H874.6V596.2H873.8V596.8H873V597.4H872.3V598H871.5V598.3H870.7V598.9H870V599.5H869.2V600H868.4V600.6H867.6V601.3H866.9V601.8H866.1V602H865.3V603H864.5V603.7H863.8V603.9H863V602.7H862.2V601.1H861.4V600.2H860.6V601.5H859.9V601.7H859.1V601.9H858.3V600.1H857.5V599.3H856.8V599H856V599.7H855.2V600H854.5V600.9H853.7V601.6H852.9V601.1H852.1V601H851.4V601.3H850.6V600.8H849.8V600.2H849V600.3H848.2V599.6H847.5V600H846.7V600.2H845.9V599.4H845.1V598.1H844.4V598.1H843.6V597.8H842.8V598.3H842V598.9H841.3V599.3H840.5V599H839.7V599.1H839V598.5H838.2V598.1H837.4V598.4H836.6V598.7H835.9V598.2H835.1V598.8H834.3V598.2H833.5V598.4H832.8V598.8H832V599H831.2V599H830.4V599.3H829.6V599.2H828.9V599.5H828.1V599H827.3V598.7H826.5V598.6H825.8V599H825V598.7H824.2V599.3H823.5V598.2H822.7V598.4H821.9V598.5H821.1V599.2H820.4V600H819.6V600.5H818.8V601.4H818V601.7H817.2V601.5H816.5V601H815.7V600.1H814.9V600.3H814.1V601.7H813.4V601.2H812.6V601.3H811.8V600.4H811V599.4H810.3V599.5H809.5V598.1H808.7V597.5H808V596.4H807.2V596.2H806.4V597.3H805.6V597.3H804.9V596.4H804.1V596.5H803.3V596.6H802.5V596.8H801.8V596.8H801V597.2H800.2V597.2H799.4V597.3H798.6V598H797.9V598H797.1V598.2H796.3V598.8H795.5V598.9H794.8V598.5H794V597.9H793.2V597.6H792.5V597.7H791.7V597.8H790.9V597.7H790.1V597.8H789.4V598.3H788.6V598.7H787.8V598.5H787V599.7H786.2V599.9H785.5V600.2H784.7V600.1H783.9V600.6H783.1V599.9H782.4V601.4H781.6V600.9H780.8V601.8H780V601.6H779.3V602.1H778.5V600.9H777.7V601.7H777V602.6H776.2V601H775.4V599.5H774.6V598.7H773.9V598H773.1V597.1H772.3V597.3H771.5V598H770.8V598.6H770V599.7H769.2V600.3H768.4V601.2H767.6V602.2H766.9V602.3H766.1V603.4H765.3V603.5H764.5V602H763.8V600.5H763V599.6H762.2V597.8H761.5V597.8H760.7V598H759.9V598.4H759.1V598.8H758.4V598.9H757.6V599.6H756.8V600.3H756V600.3H755.2V601.6H754.5V602H753.7V601.8H752.9V601.7H752.1V602.8H751.4V602.1H750.6V602.7H749.8V601.5H749V601H748.3V600.6H747.5V600H746.7V600.1H746V599.3H745.2V598.5H744.4V598.3H743.6V599.1H742.9V599.2H742.1V599.1H741.3V598.8H740.5V598.6H739.8V599.1H739V598.6H738.2V598.7H737.4V599H736.6V600H735.9V600.5H735.1V601H734.3V601.3H733.5V600.2H732.8V599.1H732V599.2H731.2V599H730.5V598.9H729.7V599.6H728.9V600H728.1V600H727.4V601H726.6V600.2H725.8V600H725V599.3H724.2V599.3H723.5V599.6H722.7V599.7H721.9V599.8H721.1V599.5H720.4V599.6H719.6V599.8H718.8V599.7H718V599.6H717.3V600H716.5V600H715.7V600.1H715V600.5H714.2V600.5H713.4V600.4H712.6V600.1H711.9V600.1H711.1V600.2H710.3V600.6H709.5V600.7H708.8V600.7H708V600.4H707.2V600.7H706.4V600.7H705.6V600.3H704.9V600.7H704.1V600.9H703.3V600.7H702.5V601.4H701.8V601.6H701V600.6H700.2V600.2H699.5V600.6H698.7V600.7H697.9V600.5H697.1V600.4H696.4V600.5H695.6V600.1H694.8V600.5H694V600.5H693.2V600.4H692.5V600.3H691.7V600.1H690.9V600.1H690.1V600.1H689.4V600.2H688.6V599.7H687.8V600H687V599.8H686.3V599.9H685.5V599.6H684.7V599.5H684V599.6H683.2V599.4H682.4V599.4H681.6V599.2H680.9V598.9H680.1V599.3H679.3V599H678.5V598.8H677.8V599.1H677V598.8H676.2V598.7H675.4V598.9H674.6V599H673.9V598.6H673.1V599H672.3V598.7H671.5V598.6H670.8V598.8H670V598.7H669.2V598.5H668.5V598.7H667.7V598.5H666.9V598.7H666.1V598.7H665.4V598.4H664.6V598.7H663.8V598.4H663V598.5H662.2V598.5H661.5V598.5H660.7V598.5H659.9V598.4H659.1V598.4H658.4V598.4H657.6V598.5H656.8V598.9H656V599H655.3V599.8H654.5V601.2H653.7V600.6H653V600.3H652.2V600.2H651.4V599.2H650.6V599.4H649.9V598.4H649.1V598.6H648.3V598.2H647.5V598.5H646.8V598.3H646V598H645.2V598.1H644.4V598H643.6V598.2H642.9V598.7H642.1V599H641.3V598.5H640.5V599.6H639.8V599.8H639V599.9H638.2V599H637.5V598.4H636.7V597.9H635.9V597.6H635.1V597.8H634.4V597.7H633.6V597.9H632.8V598.2H632V597.8H631.2V598H630.5V597.9H629.7V597.6H628.9V597.7H628.1V597.6H627.4V597.5H626.6V597.6H625.8V597.7H625V597.5H624.3V597.7H623.5V597.4H622.7V598.8H622V599.9H621.2V600.4H620.4V601.1H619.6V601.5H618.9V600.6H618.1V602H617.3V601.4H616.5V603.2H615.8V604.2H615V604.5H614.2V603.9H613.4V602.3H612.6V601.6H611.9V601.9H611.1V600.7H610.3V600.2H609.5V599.7H608.8V599.1H608V598.1H607.2V597.7H606.5V597.4H605.7V597H604.9V601H604.1V601.6H603.4V601.5H602.6V601.4H601.8V601.5H601V601.8H600.2V601.5H599.5V600H598.7V599.6H597.9V599.9H597.1V599.1H596.4V598.3H595.6V597.4H594.8V597.4H594V597.9H593.3V597.7H592.5V597.8H591.7V598.3H591V597.6H590.2V598.4H589.4V598.4H588.6V598.2H587.9V598.8H587.1V599H586.3V599.5H585.5V599.4H584.8V599.7H584V599.5H583.2V598.6H582.4V598.7H581.6V598.4H580.9V597.9H580.1V597.3H579.3V597.6H578.5V597.7H577.8V598.6H577V598.8H576.2V598.9H575.5V599H574.7V600.1H573.9V599.6H573.1V599.7H572.4V599.8H571.6V598.3H570.8V598.4H570V597.5H569.2V598.3H568.5V597.9H567.7V598.4H566.9V599.1H566.1V599.2H565.4V598.8H564.6V599.7H563.8V600.3H563V601H562.3V600.1H561.5V601.9H560.7V602H560V602.2H559.2V600.5H558.4V599.6H557.6V597.9H556.9V596.4H556.1V596.9H555.3V597H554.5V597.4H553.8V597.8H553V597.8H552.2V598.2H551.4V598.9H550.6V599.8H549.9V600.9H549.1V600.7H548.3V602.1H547.5V599.7H546.8V597.2H546V596.2H545.2V596.5H544.5V596.6H543.7V596.6H542.9V596.9H542.1V596.8H541.4V597.5H540.6V597.2H539.8V597.5H539V598.4H538.2V598H537.5V598.6H536.7V599.1H535.9V599.1H535.1V598.5H534.4V597.8H533.6V597.8H532.8V598H532V598H531.3V597.9H530.5V597.7H529.7V597.9H529V597.5H528.2V597.8H527.4V598.2H526.6V598.4H525.9V598.1H525.1V598.3H524.3V597.6H523.5V596.5H522.8V595.2H522V595.2H521.2V595.2H520.4V595.2H519.6V595.2H518.9V595.2H518.1V595.2H517.3V595.2H516.5V595.2H515.8V595.2H515V595.2H514.2V595.3H513.5V595.3H512.7V595.6H511.9V596.1H511.1V596.3H510.4V596.4H509.6V597H508.8V597.2H508V597.4H507.2V597.7H506.5V597.7H505.7V597.6H504.9V598.3H504.1V597.7H503.4V598H502.6V598.9H501.8V598.4H501.1V599.1H500.3V599.6H499.5V600H498.7V599.6H497.9V600H497.2V600.3H496.4V601.1H495.6V601H494.9V601H494.1V601.1H493.3V602.3H492.5V601.6H491.8V602.9H491V602.2H490.2V602.6H489.4V602.4H488.6V602.6H487.9V602H487.1V602.2H486.3V601.8H485.6V601.9H484.8V601.9H484V601.9H483.2V602H482.4V602H481.7V601.9H480.9V601.9H480.1V601.8H479.4V601.8H478.6V602H477.8V601.8H477V603H476.2V602.9H475.5V604H474.7V604.3H473.9V601.8H473.1V601.9H472.4V602H471.6V601.9H470.8V602H470.1V602H469.3V601.9H468.5V601.9H467.7V601.8H466.9V601.8H466.2V601.9H465.4V601.9H464.6V602H463.9V601.8H463.1V601.9H462.3V601.9H461.5V601.8H460.8V601.9H460V601.8H459.2V602H458.4V601.9H457.6V602H456.9V602H456.1V601.8H455.3V601.7H454.6V601.7H453.8V602H453V602H452.2V601.9H451.4V601.7H450.7V601.9H449.9V601.8H449.1V601.9H448.4V602H447.6V601.8H446.8V601.7H446V601.7H445.2V602H444.5V601.9H443.7V601.8H442.9V602H442.1V602.5H441.4V602.3H440.6V602.6H439.8V602.1H439.1V602.4H438.3V601.9H437.5V601.9H436.7V602H435.9V601.9H435.2V601.8H434.4V602H433.6V602H432.9V601.9H432.1V602H431.3V602H430.5V601.9H429.8V601.9H429V602H428.2V603.1H427.4V603.4H426.6V604H425.9V604.2H425.1V603.5H424.3V602.7H423.6V601.8H422.8V601.9H422V601.8H421.2V601.9H420.4V601.9H419.7V602H418.9V601.8H418.1V602H417.4V601.9H416.6V602H415.8V602H415V601.9H414.2V601.9H413.5V601.7H412.7V602H411.9V602H411.1V601.9H410.4V601.9H409.6V602H408.8V602H408.1V601.9H407.3V602H406.5V601.9H405.7V601.8H404.9V602H404.2V601.9H403.4V601.8H402.6V602H401.9V601.7H401.1V602H400.3V601.9H399.5V602H398.8V602H398V602H397.2V601.8H396.4V601.7H395.6V602H394.9V601.7H394.1V602H393.3V601.8H392.6V601.9H391.8V602H391V601.9H390.2V602H389.4V601.7H388.7V602H387.9V601.9H387.1V601.8H386.4V601.9H385.6V601.8H384.8V601.9H384V601.9H383.2V602H382.5V601.9H381.7V602H380.9V602H380.1V601.8H379.4V603H378.6V604.4H377.8V602.3H377.1V601.8H376.3V602H375.5V601.9H374.7V598.5H373.9V598H373.2V597.6H372.4V597.7H371.6V597.6H370.9V597.9H370.1V598.2H369.3V598.5H368.5V599H367.8V599.4H367V598.8H366.2V599.5H365.4V598.9H364.6V598.9H363.9V598.3H363.1V598.8H362.3V598.2H361.6V598.1H360.8V598.3H360V598.1H359.2V597.9H358.4V597.7H357.7V597.6H356.9V597.6H356.1V597.7H355.4V597.6H354.6V597.7H353.8V597.7H353V597.7H352.2V597.6H351.5V597.7H350.7V597.6H349.9V598.2H349.1V598.4H348.4V599.2H347.6V599.7H346.8V600.2H346.1V600.9H345.3V601.5H344.5V602H343.7V602H342.9V603.6H342.2V603.8H341.4V604H340.6V601.8H339.9V600.7H339.1V599.3H338.3V597.7H337.5V597.6H336.8V597.6H336V597.6H335.2V598.6H334.4V599.2H333.6V600.1H332.9V599.9H332.1V601.6H331.3V601.6H330.6V600.7H329.8V601.2H329V601.4H328.2V600.5H327.4V598.9H326.7V598.9H325.9V597.9H325.1V597.7H324.4V597.7H323.6V597.6H322.8V597.6H322V597.8H321.2V597.8H320.5V598.6H319.7V599H318.9V599.4H318.1V598.8H317.4V599.4H316.6V597.9H315.8V598.2H315.1V597.6H314.3V597.6H313.5V597.6H312.7V598.1H311.9V598.3H311.2V598.5H310.4V599H309.6V599H308.9V599H308.1V599.4H307.3V599.1H306.5V599.7H305.8V598.5H305V598.7H304.2V598.5H303.4V598.2H302.6V597.8H301.9V597.7H301.1V597.7H300.3V597.7H299.6V599H298.8V599.4H298V600.3H297.2V600.6H296.4V601.9H295.7V601.5H294.9V601.5H294.1V600.6H293.4V599.5H292.6V599.6H291.8V598.2H291V597.6H290.2V597.7H289.5V597.6H288.7V597.7H287.9V597.6H287.1V603.3H286.4V603.7H285.6V603.8H284.8V603.4H284.1V603.6H283.3V603.3H282.5V603.3H281.7V602.8H280.9V603.2H280.2V603H279.4V602.6H278.6V602.6H277.9V602.1H277.1V602.1H276.3V601.9H275.5V601.9H274.8V601.7H274V601.5H273.2V601.3H272.4V600.9H271.6V600.7H270.9V600.4H270.1V600.3H269.3V600.5H268.6V600.1H267.8V600H267V600.2H266.2V599.8H265.4V600H264.7V599.9H263.9V599.8H263.1V599.6H262.4V599.6H261.6V599.5H260.8V599.4H260V599.2H259.2V599.2H258.5V598.8H257.7V598.8H256.9V598.6H256.1V598.8H255.4V598.7H254.6V598.7H253.8V598.7H253.1V598.6H252.3V598.5H251.5V598.5H250.7V598.4H249.9V598.2H249.2V598.4H248.4V598.3H247.6V598.3H246.8V598.2H246.1V598.1H245.3V598.2H244.5V598H243.8V598.2H243V598H242.2V598.1H241.4V597.8H240.7V598H239.9V597.8H239.1V597.9H238.3V597.7H237.6V597.9H236.8V597.9H236V597.9H235.2V597.6H234.4V597.6H233.7V597.7H232.9V597.7H232.1V597.6H231.3V597.8H230.6V597.7H229.8V597.7H229V597.8H228.2V597.7H227.5V597.7H226.7V597.7H225.9V597.5H225.2V597.6H224.4V597.5H223.6V597.7H222.8V597.4H222.1V597.7H221.3V597.5H220.5V597.7H219.7V597.6H218.9V597.6H218.2V597.6H217.4V597.6H216.6V597.6H215.8V597.6H215.1V597.7H214.3V597.5H213.5V597.5H212.8V597.7H212V597.8H211.2V597.7H210.4V597.8H209.7V597.8H208.9V597.8H208.1V597.9H207.3V598H206.6V597.9H205.8V597.8H205V598.1H204.2V598.2H203.4V598H202.7V598.1H201.9V598.1H201.1V598H200.3V598.2H199.6V598H198.8V598.3H198V598.3H197.2V598.4H196.5V598.1H195.7V598.5H194.9V598.4H194.2V598.2H193.4V598.4H192.6V598.5H191.8V598.4H191.1V598.2H190.3V598H189.5V597.6H188.7V597.7H187.9V597.4H187.2V597.1H186.4V596.9H185.6V596.7H184.8V596.7H184.1V596.5H183.3V596.3H182.5V596H181.8V595.8H181V595.7H180.2V595.5H179.4V595.2H178.7V595.1H177.9V594.9H177.1V594.6H176.3V594.4H175.6V594.3H174.8V594.2H174Z"/>
<clipPath id="sc"><rect x="312.45" y="160" width="250.75" height="430"/></clipPath>
<clipPath id="osc"><rect x="287.2" y="580" width="259.2" height="30"/></clipPath>
<clipPath id="tc1"><rect x="202.5" y="166.0" width="871.0" height="137.65"/></clipPath>
<clipPath id="w1"><use href="#p1"/></clipPath>
<clipPath id="tc2"><rect x="202.5" y="305.9" width="871.0" height="136.65"/></clipPath>
<clipPath id="w2"><use href="#p2"/></clipPath>
<clipPath id="tc3"><rect x="202.5" y="444.85" width="871.0" height="137.00"/></clipPath>
<clipPath id="w3"><use href="#p3"/></clipPath>
<clipPath id="wo"><use href="#po"/></clipPath>
<clipPath id="oc"><rect x="174" y="582" width="899" height="23.3"/></clipPath>
</defs>
<path d="M168 643.3V43.2a3.2 3.2 0 0 1 3.2-3.2H1075.8a3.2 3.2 0 0 1 3.2 3.2V643.3z" fill="#eff0f1"/>
<path d="M168 161.2V43.2a3.2 3.2 0 0 1 3.2-3.2H1075.8a3.2 3.2 0 0 1 3.2 3.2V161.2z" fill="#dee0e2"/>
<rect x="171" y="40" width="905" height="0.8" fill="#e7e9eb"/>
<path d="M168.4 643.3V43.2a2.8 2.8 0 0 1 2.8-2.8" fill="none" stroke="#a3a5a7" stroke-width="0.8"/>
<path d="M1078.6 161V43.2a2.8 2.8 0 0 0-2.8-2.8" fill="none" stroke="#eceef0" stroke-width="0.8"/>
<rect x="1078.2" y="161" width="0.8" height="482.3" fill="#b4b6b9"/>
<rect x="169" y="161.8" width="909" height="481.5" fill="#f0f1f3"/>
<rect x="169" y="161.8" width="1.2" height="481.5" fill="#fff"/>
<rect x="200.4" y="164" width="877.6" height="418" fill="#fff"/>
<rect x="1073.5" y="582" width="4.5" height="26.4" fill="#fff"/>
<rect x="170.2" y="605.5" width="903.3" height="2.6" fill="#f8f9fa"/>
<rect x="169" y="161.6" width="909" height="2.4" fill="#f4f5f6"/>
<rect x="168" y="160.75" width="911" height="0.95" fill="#b9bbbd"/>
<rect x="168.7" y="624.9" width="909.6" height="0.8" fill="#cdcfd1"/>
<rect x="168.7" y="625.7" width="909.6" height="17.6" fill="#f0f1f2"/>
<circle cx="184.2" cy="176.4" r="5.6" fill="#fbeffb"/><circle cx="184.2" cy="176.4" r="5.0" fill="url(#ledg)"/>
<circle cx="184.3" cy="316.3" r="5.6" fill="#fbeffb"/><circle cx="184.3" cy="316.3" r="5.0" fill="url(#ledg)"/>
<circle cx="184.3" cy="455.4" r="5.6" fill="#fbeffb"/><circle cx="184.3" cy="455.4" r="5.0" fill="url(#ledg)"/>
<rect x="202.5" y="166.0" width="871.0" height="137.65" fill="#000"/><g clip-path="url(#tc1)"><rect x="311.7" y="166.0" width="1.6" height="137.65" fill="#ff10f0"/><rect x="562.5" y="166.0" width="1.48" height="137.65" fill="#ff10f0"/><use href="#p1" fill="#fff"/><rect x="203" y="234.41" width="870" height="0.78" fill="#00ff00"/><rect x="813.05" y="166.0" width="0.8" height="137.65" fill="#00f0ff"/><rect x="1063.4" y="166.0" width="1.0" height="137.65" fill="#00e6e6"/><rect x="1066.45" y="166.0" width="1.0" height="137.65" fill="#00e6e6"/><g clip-path="url(#w1)"><rect x="813.05" y="166.0" width="0.8" height="137.65" fill="#ff0000"/><rect x="1063.3" y="166.0" width="4.3" height="137.65" fill="#ff8c8c"/><rect x="311.7" y="166.0" width="1.6" height="137.65" fill="#00ff00"/><rect x="562.5" y="166.0" width="1.48" height="137.65" fill="#00ff00"/></g><rect x="312.45" y="166.0" width="250.75" height="137.65" fill="#ff0"/><g clip-path="url(#sc)"><use href="#p1" fill="#00f"/><rect x="312.45" y="234.41" width="250.75" height="0.78" fill="#ff0000"/></g></g>
<rect x="202.5" y="305.9" width="871.0" height="136.65" fill="#000"/><g clip-path="url(#tc2)"><rect x="311.7" y="305.9" width="1.6" height="136.65" fill="#ff10f0"/><rect x="562.5" y="305.9" width="1.48" height="136.65" fill="#ff10f0"/><use href="#p2" fill="#fff"/><rect x="203" y="374.00" width="870" height="0.8" fill="#00ff00"/><rect x="813.05" y="305.9" width="0.8" height="136.65" fill="#00f0ff"/><rect x="1063.4" y="305.9" width="1.0" height="136.65" fill="#00e6e6"/><rect x="1066.45" y="305.9" width="1.0" height="136.65" fill="#00e6e6"/><g clip-path="url(#w2)"><rect x="813.05" y="305.9" width="0.8" height="136.65" fill="#ff0000"/><rect x="1063.3" y="305.9" width="4.3" height="136.65" fill="#ff8c8c"/><rect x="311.7" y="305.9" width="1.6" height="136.65" fill="#00ff00"/><rect x="562.5" y="305.9" width="1.48" height="136.65" fill="#00ff00"/></g><rect x="312.45" y="305.9" width="250.75" height="136.65" fill="#ff0"/><g clip-path="url(#sc)"><use href="#p2" fill="#00f"/><rect x="312.45" y="374.00" width="250.75" height="0.8" fill="#ff0000"/></g></g>
<rect x="202.5" y="444.85" width="871.0" height="137.00" fill="#000"/><g clip-path="url(#tc3)"><rect x="311.7" y="444.85" width="1.6" height="137.00" fill="#ff10f0"/><rect x="562.5" y="444.85" width="1.48" height="137.00" fill="#ff10f0"/><use href="#p3" fill="#fff"/><rect x="203" y="513.06" width="870" height="0.88" fill="#00ff00"/><rect x="813.05" y="444.85" width="0.8" height="137.00" fill="#00f0ff"/><rect x="1063.4" y="444.85" width="1.0" height="137.00" fill="#00e6e6"/><rect x="1066.45" y="444.85" width="1.0" height="137.00" fill="#00e6e6"/><g clip-path="url(#w3)"><rect x="813.05" y="444.85" width="0.8" height="137.00" fill="#ff0000"/><rect x="1063.3" y="444.85" width="4.3" height="137.00" fill="#ff8c8c"/><rect x="311.7" y="444.85" width="1.6" height="137.00" fill="#00ff00"/><rect x="562.5" y="444.85" width="1.48" height="137.00" fill="#00ff00"/></g><rect x="312.45" y="444.85" width="250.75" height="137.00" fill="#ff0"/><g clip-path="url(#sc)"><use href="#p3" fill="#00f"/><rect x="312.45" y="513.06" width="250.75" height="0.88" fill="#ff0000"/></g></g>
<rect x="174" y="582" width="899.5" height="23.3" fill="#bec2c6"/>
<rect x="174" y="582" width="899.5" height="1.7" fill="#d2d5d8"/>
<g clip-path="url(#oc)"><use href="#po" fill="#fff"/>
<rect x="287.2" y="582" width="259.2" height="23.3" fill="#3e3ecc"/>
<g clip-path="url(#osc)"><use href="#po" fill="#0000ff"/></g></g>
<rect x="286.7" y="585.5" width="1" height="16" fill="#e8003c"/><path d="M283.6 582.4h7.2l-3.6 3.5z" fill="#20c4f4" stroke="#000" stroke-width="0.8" stroke-linejoin="round"/><path d="M283.6 604.8h7.2l-3.6 -3.9z" fill="#20c4f4" stroke="#000" stroke-width="0.8" stroke-linejoin="round"/>
<rect x="545.8" y="585.5" width="1" height="16" fill="#e8003c"/><path d="M542.7 582.4h7.2l-3.6 3.5z" fill="#20c4f4" stroke="#000" stroke-width="0.8" stroke-linejoin="round"/><path d="M542.7 604.8h7.2l-3.6 -3.9z" fill="#20c4f4" stroke="#000" stroke-width="0.8" stroke-linejoin="round"/>
<rect x="804.1" y="585.5" width="1" height="16" fill="#ff1a1a"/><path d="M801.0 582.4h7.2l-3.6 3.5z" fill="#20c4f4" stroke="#000" stroke-width="0.8" stroke-linejoin="round"/><path d="M801.0 604.8h7.2l-3.6 -3.9z" fill="#20c4f4" stroke="#000" stroke-width="0.8" stroke-linejoin="round"/>
<rect x="1063.3" y="585.5" width="1" height="16" fill="#ff1a1a"/><path d="M1060.2 582.4h7.2l-3.6 3.5z" fill="#20c4f4" stroke="#000" stroke-width="0.8" stroke-linejoin="round"/><path d="M1060.2 604.8h7.2l-3.6 -3.9z" fill="#20c4f4" stroke="#000" stroke-width="0.8" stroke-linejoin="round"/>
<rect x="1066.4" y="585.5" width="1" height="16" fill="#ff1a1a"/><path d="M1063.3 582.4h7.2l-3.6 3.5z" fill="#20c4f4" stroke="#000" stroke-width="0.8" stroke-linejoin="round"/><path d="M1063.3 604.8h7.2l-3.6 -3.9z" fill="#20c4f4" stroke="#000" stroke-width="0.8" stroke-linejoin="round"/>
<rect x="176.2" y="610.9" width="895.3" height="4.9" rx="2.45" fill="#cdcfd0" stroke="#bbbdbf" stroke-width="0.6"/>
<path d="M585.9 386.2H705.2V441.6H585.9V423.3L564.4 414.4L585.9 405z" fill="#eff0f1" stroke="#4d4f51" stroke-width="0.7"/>
<rect x="651.6" y="129.8" width="118.8" height="22.2" rx="2.8" fill="#cfd1d3"/>
<rect x="651.6" y="129.4" width="118.8" height="22" rx="2.8" fill="#fff" stroke="#c6c8ca" stroke-width="0.7"/>
<path d="M758.9 139.3l3.6 3.6l3.6-3.6" fill="none" stroke="#232629" stroke-width="0.9"/>
<path d="M1026.8 49.1l4.1 4.1l4.1-4.1M1045 52.8l4.1-4.1l4.1 4.1M1063.9 47.6l6.8 6.8M1070.7 47.6l-6.8 6.8" fill="none" stroke="#232629" stroke-width="1.15"/>
<g stroke="#454545" fill="none"><path d="M177.5 45.5L174.9 55.4" stroke-width="1.55"/><path d="M175.6 45.45H179.7M172.9 55.45H177.2M181.5 45.45H184.6M179.9 55.45H183.7" stroke-width="0.7"/><path d="M176.4 50.9L183.2 45.6" stroke-width="0.8"/><path d="M177.9 49.9L181.7 55.3" stroke-width="1.5"/></g>
<path d="M174.8 50.7L177.6 50.1L180.2 54.6L182.1 48.2L184.3 55.9L186.2 46.4L187.2 52" fill="none" stroke="#3cc83c" stroke-width="1.1" stroke-linejoin="round" stroke-linecap="round"/>
<g transform="translate(198.0 50.9) rotate(45) scale(0.92)"><path d="M-2.2 -5.6h4.4v4.6l1.4 1.5h-7.2l1.4 -1.5z" fill="#16181a"/><path d="M-0.45 0.5h0.9v4.9l-0.45 1.1l-0.45 -1.1z" fill="#3a3c3e"/></g>
<path d="M188.2 95.85H181.46V107.4H187.8M191.46 99.1V103.6" fill="none" stroke="#232629" stroke-width="0.95" />
<path d="M188.0 95.4L191.9 99.3H188.0z" fill="#232629" />
<path d="M189.7 103.9L190.3 105.05L191.5 105.65L190.3 106.25L189.7 107.4L189.1 106.25L187.9 105.65L189.1 105.05z" fill="#232629" />
<path d="M214.15 95.85H207.4V107.4H210.7M217.6 99.1V101.3" fill="none" stroke="#232629" stroke-width="0.95" />
<path d="M213.95 95.4L217.95 99.3H213.95z" fill="#232629" />
<path d="M211.2 102.6h3.3l0.9 1.1h2.65v4.1h-6.85z" fill="#232629" />
<path d="M212.3 104.7h4.7v2.1h-4.7z" fill="#f4f5f6" />
<path d="M232.3 95.9H241.5L243.9 98.3V107.7H232.3z" fill="none" stroke="#232629" stroke-width="1.1" />
<path d="M235.2 95.9V99.6H241V95.9M234.4 107.7V102.4H242.1V107.7" fill="none" stroke="#232629" stroke-width="1.0" />
<path d="M238.9 96.2h2.1v3.1h-2.1z" fill="#232629" />
<path d="M264 107.7H257.4V95.9H266.6L269 98.3V100.2" fill="none" stroke="#232629" stroke-width="1.1" />
<path d="M260.3 95.9V99.6H266.1V95.9M259.5 107.7V102.4H263.9" fill="none" stroke="#232629" stroke-width="1.0" />
<path d="M264 96.2h2.1v3.1h-2.1z" fill="#232629" />
<path d="M264.0 107.9L264.7 105.6L269.4 101.9L271.2 103.6L266.4 107.5z" fill="#3d4043" />
<path d="M291.2 95.9H284.55V107.6H289.7M294.9 99.5V102.8" fill="none" stroke="#da4453" stroke-width="0.95" />
<path d="M291.0 95.45L295.35 99.7H291.0z" fill="#da4453" />
<path d="M291.5 104.15L294.9 107.55M294.9 104.15L291.5 107.55" fill="none" stroke="#da4453" stroke-width="1.0" />
<path d="M322.7 95.75L320.25 98.35L322.7 100.95M320.4 98.35H324.6A4.6 4.6 0 0 1 324.6 107.55H323.1" fill="none" stroke="#232629" stroke-width="1.15" />
<path d="M352.3 95.75L354.75 98.35L352.3 100.95M354.6 98.35H350.5A4.6 4.6 0 0 0 350.5 107.55H352" fill="none" stroke="#a6a8aa" stroke-width="1.1" />
<path d="M373.1 96L378.9 104.8M379.5 96L373.7 104.8" fill="none" stroke="#232629" stroke-width="1.0" />
<path d="M374.2 105.85a1.5 1.5 0 1 1 -3 0a1.5 1.5 0 1 1 3 0zM381.5 105.85a1.5 1.5 0 1 1 -3 0a1.5 1.5 0 1 1 3 0z" fill="none" stroke="#232629" stroke-width="0.95" />
<path d="M399.8 95.65H396.2V105.85H399.3" fill="none" stroke="#232629" stroke-width="0.95" />
<path d="M399.5 95.2L403.1 98.4H401.0L399.5 97z" fill="#232629" />
<path d="M399.5 98.35H402.9L406.8 101.4V107.6H399.5z" fill="none" stroke="#232629" stroke-width="0.95" />
<path d="M402.7 97.9L407.2 101.6H402.7z" fill="#232629" />
<path d="M422.3 97.2H432.9V107.6H422.3z" fill="none" stroke="#8e9092" stroke-width="0.9" />
<path d="M424.9 95.8h5.8v2.3h-5.8z" fill="#8e9092" />
<path d="M424.9 100.4H430.4M424.9 102.7H429M424.9 105.4H427" fill="none" stroke="#8e9092" stroke-width="0.8" />
<path d="M451.2 101.9L456.3 95.8L459.7 98.2L453.9 104.6z" fill="#111315" />
<path d="M447.6 104.5L449.0 103.1L452.1 106.1L450.6 107.7z" fill="#111315" />
<path d="M474 98.2H484.9M477.4 98.2V96H481.5V98.2M475.4 98.2V107.6H483.5V98.2" fill="none" stroke="#da4453" stroke-width="0.95" />
<circle cx="190.3" cy="140.4" r="7.5" fill="#da4453"/>
<path d="M215.9 133.1L231.2 140.45L215.9 147.8z" fill="#16181b" />
<path d="M249.6 133.1h5.8v14.7h-5.8zM258.8 133.1h6v14.7h-6z" fill="#b5b7b9" />
<path d="M283 133.1h14.7v14.7H283z" fill="#b5b7b9" />
<path d="M315.1 140V139A2.7 2.7 0 0 1 317.8 136.3H330M332.7 140.4V141.8A2.7 2.7 0 0 1 330 144.5H317.8" fill="none" stroke="#232629" stroke-width="1.2" />
<path d="M329.8 134L333 136.3L329.8 138.5zM317.9 142.3L314.8 144.5L317.9 146.7z" fill="#232629" />
<path d="M344.8 133.1h3v14.7h-3zM347.8 140.45L358.9 133.1V147.8zM358.9 140.45L369.4 133.1V147.8z" fill="#b5b7b9" />
<path d="M380.3 140.45L390.7 133.1V147.8zM390.7 140.45L401.1 133.1V147.8z" fill="#b5b7b9" />
<path d="M413.4 133.1L423.8 140.45L413.4 147.8zM423.8 133.1L434.3 140.45L423.8 147.8z" fill="#b5b7b9" />
<path d="M445 133.1L455.6 140.45L445 147.8zM455.6 133.1L466.1 140.45L455.6 147.8zM466.1 133.1h3.1v14.7h-3.1z" fill="#b5b7b9" />
<circle cx="499.85" cy="140.2" r="8.2" fill="none" stroke="#16181a" stroke-width="1.7"/><path d="M505.45 145.90L509.75 150.20" fill="none" stroke="#16181a" stroke-width="2.0" />
<path d="M496.7 137.2Q500.6 135.2 503.0 138.2Q504.8 141.0 503.4 144.0Q503 141.0 501.2 139.3Q499.4 137.7 496.7 137.2z" fill="#16181a" />
<circle cx="533.3" cy="140.2" r="8.2" fill="none" stroke="#16181a" stroke-width="1.7"/><path d="M538.90 145.90L543.20 150.20" fill="none" stroke="#16181a" stroke-width="2.0" />
<path d="M529.0 138.9h3.0v-3.0h2.6v3.0h3.0v2.6h-3.0v3.0h-2.6v-3.0h-3.0z" fill="#16181a" />
<circle cx="566.8" cy="140.2" r="8.2" fill="none" stroke="#16181a" stroke-width="1.7"/><path d="M572.40 145.90L576.70 150.20" fill="none" stroke="#16181a" stroke-width="2.0" />
<path d="M562.2 138.9h9.0v2.6h-9.0z" fill="#16181a" />
<path d="M593.2 135.6A8.25 8.25 0 1 1 591.85 140.9" fill="none" stroke="#16181a" stroke-width="1.7" />
<path d="M605.9 146.1L610.2 150.3" fill="none" stroke="#16181a" stroke-width="2.0" />
<path d="M591.1 131.4V137.8L597.2 137.5z" fill="#16181a" />
<circle cx="633.4" cy="140.2" r="8.2" fill="none" stroke="#16181a" stroke-width="1.7"/><path d="M639.00 145.90L643.30 150.20" fill="none" stroke="#16181a" stroke-width="2.0" />
<path d="M629.65 136.75h7.6v7.1h-7.6z" fill="none" stroke="#16181a" stroke-width="1.5" />
<g font-family="Liberation Sans, sans-serif" fill="#232629" stroke="#232629" stroke-width="0.22">
<text x="548.4" y="54.7" font-size="10.1" text-anchor="start" textLength="149.6" lengthAdjust="spacing">/var/tmp/example.wav — Kwave</text>
<text x="176.8" y="76.7" font-size="10.1" text-anchor="start" >File</text>
<text x="208.2" y="76.7" font-size="10.1" text-anchor="start" >Edit</text>
<text x="241.7" y="76.7" font-size="10.1" text-anchor="start" >View</text>
<text x="279.5" y="76.7" font-size="10.1" text-anchor="start" >Play</text>
<text x="314.4" y="76.7" font-size="10.1" text-anchor="start" >Record</text>
<text x="361.8" y="76.7" font-size="10.1" text-anchor="start" >Labels</text>
<text x="406.2" y="76.7" font-size="10.1" text-anchor="start" >Fx</text>
<text x="432.2" y="76.7" font-size="10.1" text-anchor="start" >Calculate</text>
<text x="490" y="76.7" font-size="10.1" text-anchor="start" >Settings</text>
<text x="543.4" y="76.7" font-size="10.1" text-anchor="start" >Help</text>
<text x="655.7" y="144.2" font-size="10.1" text-anchor="start" >22 s</text>
<text x="593.3" y="405.2" font-size="10.1" text-anchor="start" textLength="103" lengthAdjust="spacing">Selection, right border</text>
<text x="593.3" y="418.6" font-size="10.1" text-anchor="start" >100000</text>
<text x="593.3" y="432.1" font-size="10.1" text-anchor="start" >00:00:09.0703</text>
<text x="765.6" y="637.9" font-size="10.1" text-anchor="start" >Mode: 11.025 kHz @ 24 Bit</text>
<text x="898.7" y="637.9" font-size="10.1" text-anchor="start" >Length: 21.897 s (241,418 samples)</text>
</g>
</svg>
</body></html>
